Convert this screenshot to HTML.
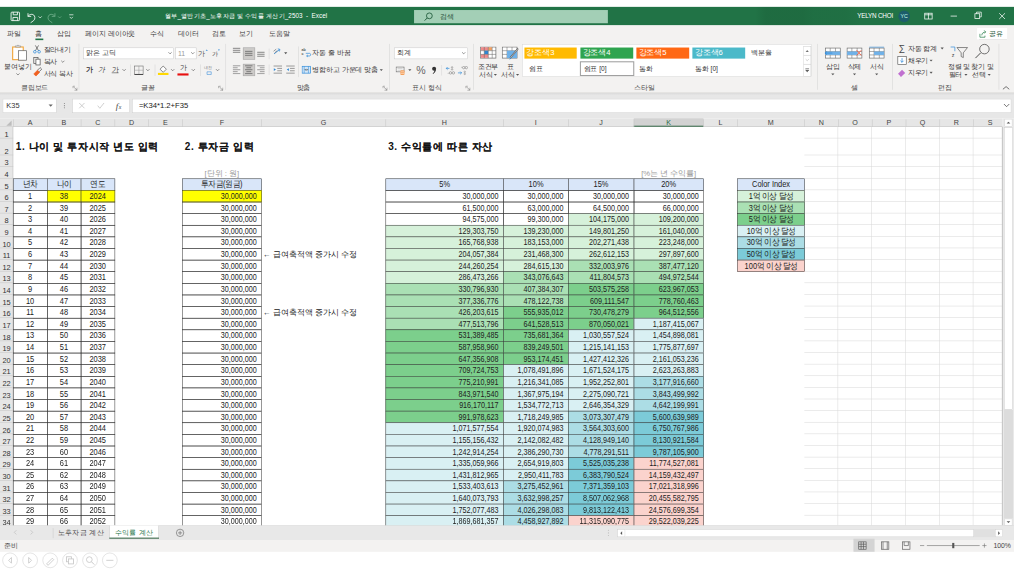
<!DOCTYPE html>
<html><head><meta charset="utf-8"><style>
html,body{margin:0;padding:0;width:1014px;height:570px;overflow:hidden;background:#fff}
#root{position:absolute;left:0;top:0;width:1920px;height:1080px;transform:scale(0.528125);transform-origin:0 0;font-family:"Liberation Sans",sans-serif}
#root div{position:absolute}
.t{white-space:nowrap;line-height:1}
.c{overflow:hidden}
</style></head><body><div id="root">
<div style="left:0px;top:0px;width:1920px;height:13px;background:#fff"></div>
<div style="left:0px;top:13px;width:1920px;height:35px;background:#217346"></div>
<div style="left:1430px;top:13px;width:200px;height:35px;background:linear-gradient(90deg, rgba(0,0,0,0) 0%, rgba(10,40,20,0.10) 10%, rgba(10,40,20,0.10) 45%, rgba(10,40,20,0.06) 55%, rgba(10,40,20,0.05) 85%, rgba(0,0,0,0) 100%)"></div>
<svg style="position:absolute;left:0;top:13px" width="300" height="35" viewBox="0 0 300 35">
<g fill="none" stroke="#fff" stroke-width="1.6">
<rect x="21" y="10" width="16" height="16" rx="1.5"/>
<path d="M25 10v5h8v-5M24.5 26v-6h9v6"/>
<path d="M53 12v6h6M53 18c3-5 12-6 13 2c1 5-5 8-8 10" />
</g>
<path d="M73 18l3 3l3-3" fill="none" stroke="#fff" stroke-width="1.3"/>
<g fill="none" stroke="#6fae8b" stroke-width="1.6">
<path d="M104 12v6h-6M104 18c-3-5-12-6-13 2c-1 5 5 8 8 10"/>
</g>
<path d="M110 18l3 3l3-3" fill="none" stroke="#6fae8b" stroke-width="1.3"/>
<path d="M131 15h8M132 19l3 3l3-3" fill="none" stroke="#fff" stroke-width="1.3"/>
</svg>
<div class="t" style="left:312px;top:30px;transform:translateY(-50%);color:#fff;font-size:12px;letter-spacing:0px">월부_열반기초_노후자금 및 수익률 계산기_2503&nbsp; -&nbsp; Excel</div>
<div style="left:784px;top:19px;width:367px;height:25px;background:#a3cfb6"></div>
<svg style="position:absolute;left:800px;top:22px" width="24" height="20" viewBox="0 0 24 20"><circle cx="13" cy="8" r="5.5" fill="none" stroke="#1f5a3a" stroke-width="1.6"/><path d="M9 12l-5 5" stroke="#1f5a3a" stroke-width="1.8"/></svg>
<div class="t" style="left:833px;top:31.5px;transform:translateY(-50%);color:#1f4a33;font-size:13.5px">검색</div>
<div class="t" style="left:1623px;top:31px;transform:translateY(-50%);color:#fff;font-size:12px;letter-spacing:-0.4px">YELYN CHOI</div>
<div style="left:1701px;top:20px;width:22px;height:22px;border-radius:50%;background:#1d5d6b"></div>
<div class="t" style="left:1712px;top:31px;transform:translate(-50%,-50%);color:#cfe;font-size:10px">YC</div>
<svg style="position:absolute;left:1737px;top:13px" width="180" height="35" viewBox="0 0 180 35">
<g fill="none" stroke="#fff" stroke-width="1.4">
<rect x="14" y="12" width="14" height="11"/><path d="M21 12v11M14 15h14"/>
<path d="M63 17.5h12"/>
<rect x="109" y="13" width="9" height="9"/><path d="M112 13v-3h9v9h-3"/>
<path d="M155 12l11 11M166 12l-11 11"/>
</g></svg>
<div style="left:0px;top:48px;width:1920px;height:126.5px;background:#f3f2f1"></div>
<div class="t" style="left:26px;top:62.5px;transform:translate(-50%,-50%);font-size:13px;color:#333">파일</div>
<div class="t" style="left:73.5px;top:62.5px;transform:translate(-50%,-50%);font-size:13px;color:#333">홈</div>
<div class="t" style="left:121px;top:62.5px;transform:translate(-50%,-50%);font-size:13px;color:#333">삽입</div>
<div class="t" style="left:209px;top:62.5px;transform:translate(-50%,-50%);font-size:13px;color:#333">페이지 레이아웃</div>
<div class="t" style="left:296.5px;top:62.5px;transform:translate(-50%,-50%);font-size:13px;color:#333">수식</div>
<div class="t" style="left:357px;top:62.5px;transform:translate(-50%,-50%);font-size:13px;color:#333">데이터</div>
<div class="t" style="left:415px;top:62.5px;transform:translate(-50%,-50%);font-size:13px;color:#333">검토</div>
<div class="t" style="left:465px;top:62.5px;transform:translate(-50%,-50%);font-size:13px;color:#333">보기</div>
<div class="t" style="left:528.5px;top:62.5px;transform:translate(-50%,-50%);font-size:13px;color:#333">도움말</div>
<div style="left:67px;top:73px;width:15px;height:3px;background:#217346"></div>
<div style="left:1850px;top:52.5px;width:57px;height:22px;background:#fff;box-shadow:0 0 1.5px rgba(0,0,0,0.18)"></div>
<svg style="position:absolute;left:1853px;top:55px" width="18" height="18" viewBox="0 0 18 18"><path d="M2.5 9v6.5h9.5v-3" fill="none" stroke="#3c8a5a" stroke-width="1.5"/><path d="M6 12c0-4 3-6.5 7-6.5M10.5 2.5l3 3l-3 3" fill="none" stroke="#3c8a5a" stroke-width="1.5"/></svg>
<div class="t" style="left:1872px;top:63.5px;transform:translateY(-50%);font-size:13.5px;color:#2a5a3c">공유</div>
<div style="left:149px;top:83px;width:1px;height:87px;background:#d4d4d4"></div>
<div style="left:427px;top:83px;width:1px;height:87px;background:#d4d4d4"></div>
<div style="left:737px;top:83px;width:1px;height:87px;background:#d4d4d4"></div>
<div style="left:896px;top:83px;width:1px;height:87px;background:#d4d4d4"></div>
<div style="left:1547px;top:83px;width:1px;height:87px;background:#d4d4d4"></div>
<div style="left:1689px;top:83px;width:1px;height:87px;background:#d4d4d4"></div>
<div style="left:1891px;top:83px;width:1px;height:87px;background:#d4d4d4"></div>
<div class="t" style="left:65.5px;top:165.5px;transform:translate(-50%,-50%);font-size:12.5px;color:#444">클립보드</div>
<div class="t" style="left:280px;top:165.5px;transform:translate(-50%,-50%);font-size:12.5px;color:#444">글꼴</div>
<div class="t" style="left:574.5px;top:165.5px;transform:translate(-50%,-50%);font-size:12.5px;color:#444">맞춤</div>
<div class="t" style="left:808px;top:165.5px;transform:translate(-50%,-50%);font-size:12.5px;color:#444">표시 형식</div>
<div class="t" style="left:1220px;top:165.5px;transform:translate(-50%,-50%);font-size:12.5px;color:#444">스타일</div>
<div class="t" style="left:1618px;top:165.5px;transform:translate(-50%,-50%);font-size:12.5px;color:#444">셀</div>
<div class="t" style="left:1790px;top:165.5px;transform:translate(-50%,-50%);font-size:12.5px;color:#444">편집</div>
<svg style="position:absolute;left:137px;top:162px" width="10" height="10" viewBox="0 0 10 10"><path d="M1 1h4M1 1v4M9 9H4M9 9V4M3 3l6 6" fill="none" stroke="#666" stroke-width="1"/></svg>
<svg style="position:absolute;left:413px;top:162px" width="10" height="10" viewBox="0 0 10 10"><path d="M1 1h4M1 1v4M9 9H4M9 9V4M3 3l6 6" fill="none" stroke="#666" stroke-width="1"/></svg>
<svg style="position:absolute;left:724px;top:162px" width="10" height="10" viewBox="0 0 10 10"><path d="M1 1h4M1 1v4M9 9H4M9 9V4M3 3l6 6" fill="none" stroke="#666" stroke-width="1"/></svg>
<svg style="position:absolute;left:881px;top:162px" width="10" height="10" viewBox="0 0 10 10"><path d="M1 1h4M1 1v4M9 9H4M9 9V4M3 3l6 6" fill="none" stroke="#666" stroke-width="1"/></svg>
<svg style="position:absolute;left:1895px;top:160px" width="20" height="12" viewBox="0 0 20 12"><path d="M4 9l6-5l6 5" fill="none" stroke="#444" stroke-width="1.4"/></svg>
<svg style="position:absolute;left:20px;top:84px" width="36" height="32" viewBox="0 0 36 32">
<rect x="4" y="5" width="20" height="24" fill="#fff" stroke="#f0a030" stroke-width="2"/>
<path d="M9 5v-2h4l1-2h0l1 2h4v2z" fill="#fff" stroke="#888" stroke-width="1.2"/>
<rect x="15" y="12" width="15" height="18" fill="#fff" stroke="#666" stroke-width="1.4"/>
</svg>
<div class="t" style="left:34px;top:126.5px;transform:translate(-50%,-50%);font-size:12.5px;color:#333">붙여넣기</div>
<svg style="position:absolute;left:29px;top:137px" width="10" height="8" viewBox="0 0 10 8"><path d="M2 2l3 3l3-3" fill="none" stroke="#555" stroke-width="1.2"/></svg>
<svg style="position:absolute;left:60px;top:84px" width="22" height="68" viewBox="0 0 22 68">
<g fill="none" stroke-width="1.4"><path d="M7 2l6 10M13 2l-6 10" stroke="#555"/><circle cx="6" cy="14" r="2.5" stroke="#2b88d8"/><circle cx="14" cy="14" r="2.5" stroke="#2b88d8"/>
<rect x="4" y="25" width="8" height="11" stroke="#555"/><rect x="8" y="28" width="8" height="11" fill="#fff" stroke="#555"/>
<path d="M4 56l7-7l4 4l-7 7z" fill="#f06020" stroke="#f06020"/><path d="M11 49l5-5l3 3l-5 5" stroke="#555"/></g>
</svg>
<div class="t" style="left:82.5px;top:93.5px;transform:translateY(-50%);font-size:12.5px;color:#333">잘라내기</div>
<div class="t" style="left:82.5px;top:116.5px;transform:translateY(-50%);font-size:12.5px;color:#333">복사</div>
<svg style="position:absolute;left:114px;top:113px" width="10" height="8" viewBox="0 0 10 8"><path d="M2 2l3 3l3-3" fill="none" stroke="#555" stroke-width="1.2"/></svg>
<div class="t" style="left:82.5px;top:140px;transform:translateY(-50%);font-size:12.5px;color:#333">서식 복사</div>
<div style="left:158px;top:90px;width:171px;height:22px;background:#fff;border:1px solid #c8c8c8;box-sizing:border-box"></div>
<div class="t" style="left:163px;top:101px;transform:translateY(-50%);font-size:12.5px;color:#333">맑은 고딕</div>
<svg style="position:absolute;left:317px;top:97px" width="10" height="8" viewBox="0 0 10 8"><path d="M2 2l3 3l3-3" fill="none" stroke="#555" stroke-width="1.2"/></svg>
<div style="left:332px;top:90px;width:40px;height:22px;background:#fff;border:1px solid #c8c8c8;box-sizing:border-box"></div>
<div class="t" style="left:337px;top:101px;transform:translateY(-50%);font-size:13px;color:#999">11</div>
<svg style="position:absolute;left:359.5px;top:97px" width="10" height="8" viewBox="0 0 10 8"><path d="M2 2l3 3l3-3" fill="none" stroke="#555" stroke-width="1.2"/></svg>
<div class="t" style="left:382.5px;top:102px;transform:translate(-50%,-50%);font-size:13.5px;color:#444">가</div>
<div class="t" style="left:407px;top:102px;transform:translate(-50%,-50%);font-size:12px;color:#444">가</div>
<svg style="position:absolute;left:385px;top:90px" width="40" height="12" viewBox="0 0 40 12"><path d="M4.5 6l2-2.5l2 2.5z" fill="#2b88d8"/><path d="M27.5 3.5l2 2.5l2-2.5z" fill="#2b88d8"/></svg>
<div class="t" style="left:169.5px;top:132px;transform:translate(-50%,-50%);font-size:13px;color:#333;font-weight:bold">가</div>
<div class="t" style="left:193px;top:132px;transform:translate(-50%,-50%);font-size:13px;color:#333;font-style:italic">가</div>
<div class="t" style="left:218px;top:132px;transform:translate(-50%,-50%);font-size:13px;color:#333"><u>가</u></div>
<svg style="position:absolute;left:230px;top:129px" width="10" height="8" viewBox="0 0 10 8"><path d="M2 2l3 3l3-3" fill="none" stroke="#555" stroke-width="1.2"/></svg>
<div style="left:247px;top:122px;width:1px;height:22px;background:#d4d4d4"></div>
<svg style="position:absolute;left:253px;top:123px" width="20" height="20" viewBox="0 0 20 20"><rect x="2" y="2" width="16" height="16" fill="none" stroke="#777" stroke-width="1.2"/><path d="M10 2v16M2 10h16" stroke="#999" stroke-width="1"/><path d="M2 18h16" stroke="#333" stroke-width="1.6"/></svg>
<svg style="position:absolute;left:275px;top:129px" width="10" height="8" viewBox="0 0 10 8"><path d="M2 2l3 3l3-3" fill="none" stroke="#555" stroke-width="1.2"/></svg>
<div style="left:293px;top:122px;width:1px;height:22px;background:#d4d4d4"></div>
<svg style="position:absolute;left:298px;top:121px" width="22" height="22" viewBox="0 0 22 22"><path d="M5 10l6-6l6 6l-6 6z" fill="#fff" stroke="#555" stroke-width="1.3"/><rect x="1" y="17" width="20" height="4" fill="#ffd800"/></svg>
<svg style="position:absolute;left:321.6px;top:129px" width="10" height="8" viewBox="0 0 10 8"><path d="M2 2l3 3l3-3" fill="none" stroke="#555" stroke-width="1.2"/></svg>
<div class="t" style="left:346.5px;top:128px;transform:translate(-50%,-50%);font-size:13px;color:#333">가</div>
<div style="left:336px;top:139px;width:21px;height:4px;background:#e81010"></div>
<svg style="position:absolute;left:360.5px;top:129px" width="10" height="8" viewBox="0 0 10 8"><path d="M2 2l3 3l3-3" fill="none" stroke="#555" stroke-width="1.2"/></svg>
<div style="left:378.7px;top:122px;width:1px;height:22px;background:#d4d4d4"></div>
<svg style="position:absolute;left:384px;top:122px" width="20" height="22" viewBox="0 0 20 22"><text x="2" y="9" font-size="7" fill="#777" font-family="Liberation Sans">내천</text><path d="M8 14h8v5h-8z" fill="none" stroke="#2b88d8" stroke-width="1"/></svg>
<svg style="position:absolute;left:406.6px;top:129px" width="10" height="8" viewBox="0 0 10 8"><path d="M2 2l3 3l3-3" fill="none" stroke="#555" stroke-width="1.2"/></svg>
<div style="left:460px;top:89.5px;width:22.5px;height:23px;background:#cdcbc9;border:1.5px solid #a8a8a8;box-sizing:border-box"></div>
<div style="left:460px;top:120.5px;width:22.5px;height:23.5px;background:#cdcbc9;border:1.5px solid #a8a8a8;box-sizing:border-box"></div>
<svg style="position:absolute;left:439px;top:89px" width="18" height="18" viewBox="0 0 18 18"><g stroke="#555" stroke-width="1.3"><path d="M2 2.5h14M2 6.25h14M2 10h14"/></g></svg>
<svg style="position:absolute;left:462.2px;top:92px" width="18" height="18" viewBox="0 0 18 18"><g stroke="#555" stroke-width="1.3"><path d="M2 5.25h14M2 9h14M2 12.75h14"/></g></svg>
<svg style="position:absolute;left:485px;top:91px" width="18" height="18" viewBox="0 0 18 18"><g stroke="#555" stroke-width="1.3"><path d="M2 8h14M2 11.75h14M2 15.5h14"/></g></svg>
<svg style="position:absolute;left:439px;top:123.30000000000001px" width="18" height="18" viewBox="0 0 18 18"><g stroke="#555" stroke-width="1.3"><path d="M2 1.6h14M2 5.3h9M2 9h14M2 12.7h9M2 16.4h14" stroke="#777"/></g></svg>
<svg style="position:absolute;left:462.2px;top:123.30000000000001px" width="18" height="18" viewBox="0 0 18 18"><g stroke="#555" stroke-width="1.3"><path d="M2 1.6h14M4.5 5.3h9M2 9h14M4.5 12.7h9M2 16.4h14"/></g></svg>
<svg style="position:absolute;left:485px;top:123.30000000000001px" width="18" height="18" viewBox="0 0 18 18"><g stroke="#555" stroke-width="1.3"><path d="M2 1.6h14M7 5.3h9M2 9h14M7 12.7h9M2 16.4h14" stroke="#777"/></g></svg>
<div style="left:509px;top:92px;width:1px;height:20px;background:#d4d4d4"></div>
<div style="left:509px;top:122px;width:1px;height:20px;background:#d4d4d4"></div>
<svg style="position:absolute;left:515px;top:89px" width="22" height="20" viewBox="0 0 22 20"><path d="M4 13l10-8" stroke="#2b88d8" stroke-width="1.6"/><path d="M11 3.5l4 1l-1 4" fill="none" stroke="#2b88d8" stroke-width="1.4"/><path d="M3 8l5-4M5 11l5-4" stroke="#666" stroke-width="1.2"/></svg>
<svg style="position:absolute;left:537px;top:98px" width="8" height="6" viewBox="0 0 8 6"><path d="M1 1h6l-3 3.5z" fill="#555"/></svg>
<svg style="position:absolute;left:517px;top:123px" width="18" height="18" viewBox="0 0 18 18"><g stroke="#666" stroke-width="1.2"><path d="M1 2h16M8 6.5h9M8 11h9M1 15.5h16"/></g><path d="M1.5 6l4 2.8l-4 2.8z" fill="#2b88d8"/></svg>
<svg style="position:absolute;left:541px;top:123px" width="18" height="18" viewBox="0 0 18 18"><g stroke="#666" stroke-width="1.2"><path d="M1 2h16M8 6.5h9M8 11h9M1 15.5h16"/></g><path d="M6 6l-4 2.8l4 2.8z" fill="#2b88d8"/></svg>
<div style="left:565px;top:88px;width:1px;height:58px;background:#d4d4d4"></div>
<svg style="position:absolute;left:570px;top:89px" width="22" height="20" viewBox="0 0 22 20"><text x="1" y="7.5" font-size="7" fill="#555" font-family="Liberation Sans" font-weight="bold">ab</text><text x="1" y="16" font-size="7" fill="#555" font-family="Liberation Sans" font-weight="bold">c</text><path d="M9 12h7c3 0 3 5 0 5h-5M13 15l-2.5 2l2.5 2" fill="none" stroke="#2b88d8" stroke-width="1.3"/></svg>
<div class="t" style="left:591.5px;top:99.5px;transform:translateY(-50%);font-size:12.5px;color:#333">자동 줄 바꿈</div>
<svg style="position:absolute;left:571px;top:124px" width="18" height="16" viewBox="0 0 18 16"><rect x="1" y="1.5" width="16" height="13" fill="#d5e8f8" stroke="#2b88d8" stroke-width="1.3"/><path d="M5 1.5v13M13 1.5v13" stroke="#2b88d8" stroke-width="1"/><path d="M6.5 8h5M6.5 8l1.5-1.5M6.5 8l1.5 1.5M11.5 8l-1.5-1.5M11.5 8l-1.5 1.5" stroke="#444" stroke-width="1" fill="none"/></svg>
<div class="t" style="left:591.5px;top:132px;transform:translateY(-50%);font-size:12.5px;color:#333">병합하고 가운데 맞춤</div>
<svg style="position:absolute;left:717.5px;top:130px" width="8" height="6" viewBox="0 0 8 6"><path d="M1 1h6l-3 3.5z" fill="#555"/></svg>
<div style="left:746px;top:90px;width:140px;height:22px;background:#fff;border:1px solid #c8c8c8;box-sizing:border-box"></div>
<div class="t" style="left:752px;top:101px;transform:translateY(-50%);font-size:12.5px;color:#333">회계</div>
<svg style="position:absolute;left:873px;top:97px" width="10" height="8" viewBox="0 0 10 8"><path d="M2 2l3 3l3-3" fill="none" stroke="#555" stroke-width="1.2"/></svg>
<svg style="position:absolute;left:749px;top:125px" width="20" height="18" viewBox="0 0 20 18"><rect x="1" y="2" width="15" height="9" fill="#fff" stroke="#666" stroke-width="1.2"/><path d="M3.5 5h10M3.5 8h10" stroke="#999" stroke-width="0.9"/><rect x="9" y="8" width="8" height="9" rx="2" fill="#f5a05a"/><path d="M9.5 11h7M9.5 14h7" stroke="#fff" stroke-width="0.9"/></svg>
<svg style="position:absolute;left:771.6px;top:130px" width="8" height="6" viewBox="0 0 8 6"><path d="M1 1h6l-3 3.5z" fill="#555"/></svg>
<div class="t" style="left:797px;top:132.5px;transform:translate(-50%,-50%);font-size:20px;color:#666">%</div>
<svg style="position:absolute;left:816px;top:125px" width="12" height="16" viewBox="0 0 12 16"><circle cx="6" cy="5" r="3.8" fill="#333"/><path d="M9.5 5.5c0 4-2 7.5-5.5 9.5l-0.8-1c2.2-1.6 3.3-3.6 3.3-6z" fill="#333"/></svg>
<div style="left:835.5px;top:123px;width:1px;height:20px;background:#d4d4d4"></div>
<svg style="position:absolute;left:843px;top:125px" width="20" height="18" viewBox="0 0 20 18"><path d="M8 4.5h-6M2 4.5l2.5-2.5M2 4.5l2.5 2.5" fill="none" stroke="#2b88d8" stroke-width="1.3"/><circle cx="13" cy="2.5" r="1.4" fill="none" stroke="#777" stroke-width="0.9"/><circle cx="13" cy="6.5" r="1.4" fill="none" stroke="#777" stroke-width="0.9"/><path d="M5 14h1" stroke="#777" stroke-width="1.5"/><circle cx="10" cy="13" r="2.3" fill="none" stroke="#777" stroke-width="1"/><circle cx="15.5" cy="13" r="2.3" fill="none" stroke="#777" stroke-width="1"/></svg>
<svg style="position:absolute;left:866px;top:125px" width="20" height="18" viewBox="0 0 20 18"><path d="M8 2.5h1" stroke="#777" stroke-width="1.5"/><circle cx="12" cy="3" r="2.3" fill="none" stroke="#777" stroke-width="1"/><circle cx="17" cy="3" r="2.3" fill="none" stroke="#777" stroke-width="1"/><path d="M1 13h7M8 13l-2.5-2.5M8 13l-2.5 2.5" fill="none" stroke="#2b88d8" stroke-width="1.3"/><circle cx="14" cy="11" r="1.4" fill="none" stroke="#777" stroke-width="0.9"/><circle cx="14" cy="15" r="1.4" fill="none" stroke="#777" stroke-width="0.9"/></svg>
<svg style="position:absolute;left:909px;top:88px" width="32" height="24" viewBox="0 0 32 24">
<rect x="1" y="1" width="29" height="21" fill="#fff" stroke="#666" stroke-width="1.3"/>
<rect x="1.5" y="1.5" width="14" height="6" fill="#f08a8a"/><rect x="8" y="8" width="7.5" height="7" fill="#2b88d8"/><rect x="1.5" y="15" width="14" height="6.5" fill="#f08a8a"/><rect x="15.5" y="1.5" width="7" height="6" fill="#f4a060"/>
<path d="M1 8h29M1 15h29M8 1v21M15.5 1v21M23 1v21" stroke="#666" stroke-width="1"/>
</svg>
<div class="t" style="left:924px;top:125.5px;transform:translate(-50%,-50%);font-size:12.5px;color:#333">조건부</div>
<div class="t" style="left:907px;top:141.5px;transform:translateY(-50%);font-size:12.5px;color:#333">서식</div>
<svg style="position:absolute;left:934px;top:139px" width="8" height="6" viewBox="0 0 8 6"><path d="M1 1h6l-3 3.5z" fill="#555"/></svg>
<svg style="position:absolute;left:950px;top:88px" width="34" height="28" viewBox="0 0 34 28">
<rect x="1" y="1" width="28" height="21" fill="#fff" stroke="#666" stroke-width="1.3"/>
<path d="M1 8h28M1 15h28M10 1v21M19.5 1v21" stroke="#666" stroke-width="1"/><rect x="10" y="8" width="19" height="14" fill="#6fb1e8"/>
<path d="M31 4l-15 18" stroke="#555" stroke-width="3"/><path d="M31 4l-15 18" stroke="#fff" stroke-width="1"/><path d="M17 21l-3 4l4-2z" fill="#2b88d8"/>
</svg>
<div class="t" style="left:965.7px;top:125.5px;transform:translate(-50%,-50%);font-size:12.5px;color:#333">표</div>
<div class="t" style="left:949px;top:141.5px;transform:translateY(-50%);font-size:12.5px;color:#333">서식</div>
<svg style="position:absolute;left:976px;top:139px" width="8" height="6" viewBox="0 0 8 6"><path d="M1 1h6l-3 3.5z" fill="#555"/></svg>
<div style="left:989px;top:84px;width:548px;height:61px;background:#fff;border:1px solid #d8d8d8;box-sizing:border-box"></div>
<div style="left:992.7px;top:90px;width:99.79999999999995px;height:20.5px;background:#ffba00"></div>
<div class="t" style="left:996.7px;top:100px;transform:translateY(-50%);font-size:14.5px;color:#fff;letter-spacing:0px">강조색3</div>
<div style="left:1099px;top:90px;width:99.59999999999991px;height:20.5px;background:#2ea44f"></div>
<div class="t" style="left:1103px;top:100px;transform:translateY(-50%);font-size:14.5px;color:#fff;letter-spacing:0px">강조색4</div>
<div style="left:1205px;top:90px;width:99.59999999999991px;height:20.5px;background:#ff6814"></div>
<div class="t" style="left:1209px;top:100px;transform:translateY(-50%);font-size:14.5px;color:#fff;letter-spacing:0px">강조색5</div>
<div style="left:1311.4px;top:90px;width:99.29999999999995px;height:20.5px;background:#4bb9c9"></div>
<div class="t" style="left:1315.4px;top:100px;transform:translateY(-50%);font-size:14.5px;color:#fff;letter-spacing:0px">강조색6</div>
<div class="t" style="left:1421.6px;top:100px;transform:translateY(-50%);font-size:12.5px;color:#333">백분율</div>
<div style="left:1098px;top:116px;width:103px;height:28px;border:2px solid #a0a0a0;box-sizing:border-box"></div>
<div class="t" style="left:1001px;top:130px;transform:translateY(-50%);font-size:12.5px;color:#333">쉼표</div>
<div class="t" style="left:1105px;top:130px;transform:translateY(-50%);font-size:12.5px;color:#333">쉼표 [0]</div>
<div class="t" style="left:1210px;top:130px;transform:translateY(-50%);font-size:12.5px;color:#333">통화</div>
<div class="t" style="left:1316px;top:130px;transform:translateY(-50%);font-size:12.5px;color:#333">통화 [0]</div>
<svg style="position:absolute;left:1521px;top:87px" width="16" height="58" viewBox="0 0 16 58">
<rect x="0.5" y="0.5" width="14" height="57" fill="#fff" stroke="#c8c8c8"/>
<path d="M0.5 18h14M0.5 35h14" stroke="#c8c8c8"/>
<path d="M4.5 11l3-3l3 3z" fill="#444"/><path d="M4.5 25l3 3l3-3" fill="none" stroke="#aaa"/>
<path d="M4 43h7M4.5 46l3 3l3-3z" stroke="#444" fill="#444"/>
</svg>
<svg style="position:absolute;left:1560.7px;top:88px" width="32" height="24" viewBox="0 0 32 24"><rect x="2" y="3" width="28" height="19" fill="#fff" stroke="#666" stroke-width="1.2"/><path d="M2 9.5h28M2 16h28M11 3v19M21 3v19" stroke="#666" stroke-width="1"/><rect x="2" y="9.5" width="28" height="6.5" fill="#6fb1e8"/><path d="M1 12.5h14M1 12.5l4-3M1 12.5l4 3" stroke="#2b88d8" stroke-width="1.3" fill="none"/></svg>
<div class="t" style="left:1576.7px;top:126px;transform:translate(-50%,-50%);font-size:12.5px;color:#333">삽입</div>
<svg style="position:absolute;left:1572.7px;top:138px" width="8" height="6" viewBox="0 0 8 6"><path d="M1 1h6l-3 3.5z" fill="#555"/></svg>
<svg style="position:absolute;left:1601.8px;top:88px" width="32" height="24" viewBox="0 0 32 24"><rect x="2" y="3" width="28" height="19" fill="#fff" stroke="#666" stroke-width="1.2"/><path d="M2 9.5h28M2 16h28M11 3v19M21 3v19" stroke="#666" stroke-width="1"/><rect x="2" y="9.5" width="20" height="6.5" fill="#6fb1e8"/><path d="M20 7l9 10M29 7l-9 10" stroke="#f05a40" stroke-width="1.6"/></svg>
<div class="t" style="left:1617.8px;top:126px;transform:translate(-50%,-50%);font-size:12.5px;color:#333">삭제</div>
<svg style="position:absolute;left:1613.8px;top:138px" width="8" height="6" viewBox="0 0 8 6"><path d="M1 1h6l-3 3.5z" fill="#555"/></svg>
<svg style="position:absolute;left:1644px;top:88px" width="32" height="24" viewBox="0 0 32 24"><rect x="2" y="3" width="28" height="19" fill="#fff" stroke="#666" stroke-width="1.2"/><path d="M2 9.5h28M2 16h28M11 3v19M21 3v19" stroke="#666" stroke-width="1"/><rect x="11" y="9.5" width="19" height="6.5" fill="#6fb1e8"/><path d="M2 1h28" stroke="#2b88d8" stroke-width="1.5"/></svg>
<div class="t" style="left:1660px;top:126px;transform:translate(-50%,-50%);font-size:12.5px;color:#333">서식</div>
<svg style="position:absolute;left:1656px;top:138px" width="8" height="6" viewBox="0 0 8 6"><path d="M1 1h6l-3 3.5z" fill="#555"/></svg>
<div class="t" style="left:1707.5px;top:91.5px;transform:translate(-50%,-50%);font-size:17px;color:#444">∑</div>
<div class="t" style="left:1718.7px;top:92px;transform:translateY(-50%);font-size:12.5px;color:#333">자동 합계</div>
<svg style="position:absolute;left:1780px;top:89px" width="8" height="6" viewBox="0 0 8 6"><path d="M1 1h6l-3 3.5z" fill="#555"/></svg>
<svg style="position:absolute;left:1698px;top:105px" width="20" height="20" viewBox="0 0 20 20"><rect x="2" y="2" width="16" height="15" fill="#fff" stroke="#555" stroke-width="1.2"/><path d="M10 5v8M7 10l3 3l3-3" fill="none" stroke="#2b88d8" stroke-width="1.4"/></svg>
<div class="t" style="left:1718.7px;top:115px;transform:translateY(-50%);font-size:12.5px;color:#333">채우기</div>
<svg style="position:absolute;left:1758.5px;top:112px" width="8" height="6" viewBox="0 0 8 6"><path d="M1 1h6l-3 3.5z" fill="#555"/></svg>
<svg style="position:absolute;left:1698px;top:128px" width="20" height="20" viewBox="0 0 20 20"><path d="M2 12l8-8l6 6l-8 8z" fill="#c070d0"/><path d="M2 12l4 4" stroke="#fff" stroke-width="1"/></svg>
<div class="t" style="left:1718.7px;top:138.4px;transform:translateY(-50%);font-size:12.5px;color:#333">지우기</div>
<svg style="position:absolute;left:1758.5px;top:135.4px" width="8" height="6" viewBox="0 0 8 6"><path d="M1 1h6l-3 3.5z" fill="#555"/></svg>
<svg style="position:absolute;left:1798px;top:84px" width="36" height="30" viewBox="0 0 36 30">
<path d="M2 5h8v8" fill="none" stroke="#2b88d8" stroke-width="1.3"/><text x="4" y="24" font-size="10" fill="#444" font-family="Liberation Sans">z</text>
<path d="M14 6h20l-8 10v9l-4-2v-7z" fill="none" stroke="#555" stroke-width="1.3"/>
</svg>
<div class="t" style="left:1816px;top:126px;transform:translate(-50%,-50%);font-size:12.5px;color:#333">정렬 및</div>
<div class="t" style="left:1809px;top:141.8px;transform:translate(-50%,-50%);font-size:12.5px;color:#333">필터</div>
<svg style="position:absolute;left:1825px;top:139px" width="8" height="6" viewBox="0 0 8 6"><path d="M1 1h6l-3 3.5z" fill="#555"/></svg>
<svg style="position:absolute;left:1842px;top:80px" width="36" height="34" viewBox="0 0 36 34">
<circle cx="22" cy="13" r="9" fill="none" stroke="#444" stroke-width="1.4"/><path d="M15 20l-10 10" stroke="#444" stroke-width="1.8"/>
</svg>
<div class="t" style="left:1860.5px;top:126px;transform:translate(-50%,-50%);font-size:12.5px;color:#333">찾기 및</div>
<div class="t" style="left:1853px;top:141.8px;transform:translate(-50%,-50%);font-size:12.5px;color:#333">선택</div>
<svg style="position:absolute;left:1869px;top:139px" width="8" height="6" viewBox="0 0 8 6"><path d="M1 1h6l-3 3.5z" fill="#555"/></svg>
<div style="left:0px;top:174.5px;width:1920px;height:1.5px;background:#d4d2d0"></div>
<div style="left:0px;top:176px;width:1920px;height:4px;background:linear-gradient(#dadada,#e6e6e6)"></div>
<div style="left:0px;top:180px;width:1920px;height:44px;background:#e7e7e7"></div>
<div style="left:5px;top:186.5px;width:102px;height:27px;background:#fff;border:1.5px solid #cdcdcd;box-sizing:border-box"></div>
<div class="t" style="left:12px;top:200px;transform:translateY(-50%);font-size:14px;color:#333">K35</div>
<svg style="position:absolute;left:90px;top:196px" width="12" height="8" viewBox="0 0 12 8"><path d="M2 2h8l-4 4z" fill="#666"/></svg>
<svg style="position:absolute;left:119px;top:190px" width="6" height="20" viewBox="0 0 6 20"><circle cx="3" cy="6" r="1.1" fill="#888"/><circle cx="3" cy="10" r="1.1" fill="#888"/><circle cx="3" cy="14" r="1.1" fill="#888"/></svg>
<div style="left:137px;top:186.5px;width:109px;height:27px;background:#fff;border:1.5px solid #cdcdcd;box-sizing:border-box"></div>
<svg style="position:absolute;left:140px;top:188px" width="104" height="24" viewBox="0 0 104 24">
<path d="M10 7l10 10M20 7l-10 10" stroke="#b8b8b8" stroke-width="1.3"/>
<path d="M45 12l4 5l8-10" fill="none" stroke="#b8b8b8" stroke-width="1.3"/>
<text x="79" y="18" font-size="17" font-style="italic" fill="#444" font-family="Liberation Serif">f</text><text x="85" y="19" font-size="11" font-style="italic" fill="#444" font-family="Liberation Serif">x</text>
</svg>
<div style="left:250px;top:186.5px;width:1665px;height:27px;background:#fff;border:1.5px solid #cdcdcd;box-sizing:border-box"></div>
<div class="t" style="left:263px;top:200px;transform:translateY(-50%);font-size:14.5px;color:#222">=K34*1.2+F35</div>
<svg style="position:absolute;left:1899px;top:195px" width="14" height="10" viewBox="0 0 14 10"><path d="M2 2l5 5l5-5" fill="none" stroke="#444" stroke-width="1.4"/></svg>
<div style="left:0px;top:224px;width:1920px;height:771px;background:#fff"></div>
<div style="left:0px;top:224px;width:1898px;height:16px;background:#e6e6e6;border-bottom:1px solid #bdbdbd;box-sizing:border-box"></div>
<div style="left:1200px;top:224px;width:132px;height:16px;background:#d2d2d2;border-bottom:2px solid #3b6e4e;box-sizing:border-box"></div>
<div style="left:25px;top:226px;width:1px;height:14px;background:#c6c6c6"></div>
<div class="t" style="left:57.0px;top:232.5px;transform:translate(-50%,-50%);font-size:13.5px;color:#444">A</div>
<div style="left:89px;top:226px;width:1px;height:14px;background:#c6c6c6"></div>
<div class="t" style="left:121.0px;top:232.5px;transform:translate(-50%,-50%);font-size:13.5px;color:#444">B</div>
<div style="left:153px;top:226px;width:1px;height:14px;background:#c6c6c6"></div>
<div class="t" style="left:185.0px;top:232.5px;transform:translate(-50%,-50%);font-size:13.5px;color:#444">C</div>
<div style="left:217px;top:226px;width:1px;height:14px;background:#c6c6c6"></div>
<div class="t" style="left:249.0px;top:232.5px;transform:translate(-50%,-50%);font-size:13.5px;color:#444">D</div>
<div style="left:281px;top:226px;width:1px;height:14px;background:#c6c6c6"></div>
<div class="t" style="left:313.0px;top:232.5px;transform:translate(-50%,-50%);font-size:13.5px;color:#444">E</div>
<div style="left:345px;top:226px;width:1px;height:14px;background:#c6c6c6"></div>
<div class="t" style="left:420.0px;top:232.5px;transform:translate(-50%,-50%);font-size:13.5px;color:#444">F</div>
<div style="left:495px;top:226px;width:1px;height:14px;background:#c6c6c6"></div>
<div class="t" style="left:612.5px;top:232.5px;transform:translate(-50%,-50%);font-size:13.5px;color:#444">G</div>
<div style="left:730px;top:226px;width:1px;height:14px;background:#c6c6c6"></div>
<div class="t" style="left:841.5px;top:232.5px;transform:translate(-50%,-50%);font-size:13.5px;color:#444">H</div>
<div style="left:953px;top:226px;width:1px;height:14px;background:#c6c6c6"></div>
<div class="t" style="left:1014.5px;top:232.5px;transform:translate(-50%,-50%);font-size:13.5px;color:#444">I</div>
<div style="left:1076px;top:226px;width:1px;height:14px;background:#c6c6c6"></div>
<div class="t" style="left:1138.0px;top:232.5px;transform:translate(-50%,-50%);font-size:13.5px;color:#444">J</div>
<div style="left:1200px;top:226px;width:1px;height:14px;background:#c6c6c6"></div>
<div class="t" style="left:1266.0px;top:232.5px;transform:translate(-50%,-50%);font-size:13.5px;color:#2a6a45">K</div>
<div style="left:1332px;top:226px;width:1px;height:14px;background:#c6c6c6"></div>
<div class="t" style="left:1364.0px;top:232.5px;transform:translate(-50%,-50%);font-size:13.5px;color:#444">L</div>
<div style="left:1396px;top:226px;width:1px;height:14px;background:#c6c6c6"></div>
<div class="t" style="left:1459.5px;top:232.5px;transform:translate(-50%,-50%);font-size:13.5px;color:#444">M</div>
<div style="left:1523px;top:226px;width:1px;height:14px;background:#c6c6c6"></div>
<div class="t" style="left:1555.0px;top:232.5px;transform:translate(-50%,-50%);font-size:13.5px;color:#444">N</div>
<div style="left:1587px;top:226px;width:1px;height:14px;background:#c6c6c6"></div>
<div class="t" style="left:1619.0px;top:232.5px;transform:translate(-50%,-50%);font-size:13.5px;color:#444">O</div>
<div style="left:1651px;top:226px;width:1px;height:14px;background:#c6c6c6"></div>
<div class="t" style="left:1683.0px;top:232.5px;transform:translate(-50%,-50%);font-size:13.5px;color:#444">P</div>
<div style="left:1715px;top:226px;width:1px;height:14px;background:#c6c6c6"></div>
<div class="t" style="left:1747.0px;top:232.5px;transform:translate(-50%,-50%);font-size:13.5px;color:#444">Q</div>
<div style="left:1779px;top:226px;width:1px;height:14px;background:#c6c6c6"></div>
<div class="t" style="left:1811.0px;top:232.5px;transform:translate(-50%,-50%);font-size:13.5px;color:#444">R</div>
<div style="left:1843px;top:226px;width:1px;height:14px;background:#c6c6c6"></div>
<div class="t" style="left:1875.0px;top:232.5px;transform:translate(-50%,-50%);font-size:13.5px;color:#444">S</div>
<svg style="position:absolute;left:8px;top:225px" width="16" height="15" viewBox="0 0 16 15"><path d="M14 3v10h-10z" fill="#bdbdbd"/></svg>
<div style="left:0px;top:240px;width:25px;height:755px;background:#e6e6e6;border-right:1px solid #bdbdbd;box-sizing:border-box"></div>
<div style="left:0px;top:261px;width:25px;height:1px;background:#c6c6c6"></div>
<div class="t" style="left:12.5px;top:253.5px;transform:translate(-50%,-50%);font-size:14px;color:#333">1</div>
<div style="left:0px;top:293px;width:25px;height:1px;background:#c6c6c6"></div>
<div class="t" style="left:12.5px;top:285.5px;transform:translate(-50%,-50%);font-size:14px;color:#333">2</div>
<div style="left:0px;top:315px;width:25px;height:1px;background:#c6c6c6"></div>
<div class="t" style="left:12.5px;top:307.5px;transform:translate(-50%,-50%);font-size:14px;color:#333">3</div>
<div style="left:0px;top:337px;width:25px;height:1px;background:#c6c6c6"></div>
<div class="t" style="left:12.5px;top:329.5px;transform:translate(-50%,-50%);font-size:14px;color:#333">4</div>
<div style="left:0px;top:359px;width:25px;height:1px;background:#c6c6c6"></div>
<div class="t" style="left:12.5px;top:351.5px;transform:translate(-50%,-50%);font-size:14px;color:#333">5</div>
<div style="left:0px;top:381px;width:25px;height:1px;background:#c6c6c6"></div>
<div class="t" style="left:12.5px;top:373.5px;transform:translate(-50%,-50%);font-size:14px;color:#333">6</div>
<div style="left:0px;top:403px;width:25px;height:1px;background:#c6c6c6"></div>
<div class="t" style="left:12.5px;top:395.5px;transform:translate(-50%,-50%);font-size:14px;color:#333">7</div>
<div style="left:0px;top:425px;width:25px;height:1px;background:#c6c6c6"></div>
<div class="t" style="left:12.5px;top:417.5px;transform:translate(-50%,-50%);font-size:14px;color:#333">8</div>
<div style="left:0px;top:447px;width:25px;height:1px;background:#c6c6c6"></div>
<div class="t" style="left:12.5px;top:439.5px;transform:translate(-50%,-50%);font-size:14px;color:#333">9</div>
<div style="left:0px;top:469px;width:25px;height:1px;background:#c6c6c6"></div>
<div class="t" style="left:12.5px;top:461.5px;transform:translate(-50%,-50%);font-size:14px;color:#333">10</div>
<div style="left:0px;top:491px;width:25px;height:1px;background:#c6c6c6"></div>
<div class="t" style="left:12.5px;top:483.5px;transform:translate(-50%,-50%);font-size:14px;color:#333">11</div>
<div style="left:0px;top:513px;width:25px;height:1px;background:#c6c6c6"></div>
<div class="t" style="left:12.5px;top:505.5px;transform:translate(-50%,-50%);font-size:14px;color:#333">12</div>
<div style="left:0px;top:535px;width:25px;height:1px;background:#c6c6c6"></div>
<div class="t" style="left:12.5px;top:527.5px;transform:translate(-50%,-50%);font-size:14px;color:#333">13</div>
<div style="left:0px;top:557px;width:25px;height:1px;background:#c6c6c6"></div>
<div class="t" style="left:12.5px;top:549.5px;transform:translate(-50%,-50%);font-size:14px;color:#333">14</div>
<div style="left:0px;top:579px;width:25px;height:1px;background:#c6c6c6"></div>
<div class="t" style="left:12.5px;top:571.5px;transform:translate(-50%,-50%);font-size:14px;color:#333">15</div>
<div style="left:0px;top:601px;width:25px;height:1px;background:#c6c6c6"></div>
<div class="t" style="left:12.5px;top:593.5px;transform:translate(-50%,-50%);font-size:14px;color:#333">16</div>
<div style="left:0px;top:623px;width:25px;height:1px;background:#c6c6c6"></div>
<div class="t" style="left:12.5px;top:615.5px;transform:translate(-50%,-50%);font-size:14px;color:#333">17</div>
<div style="left:0px;top:645px;width:25px;height:1px;background:#c6c6c6"></div>
<div class="t" style="left:12.5px;top:637.5px;transform:translate(-50%,-50%);font-size:14px;color:#333">18</div>
<div style="left:0px;top:667px;width:25px;height:1px;background:#c6c6c6"></div>
<div class="t" style="left:12.5px;top:659.5px;transform:translate(-50%,-50%);font-size:14px;color:#333">19</div>
<div style="left:0px;top:689px;width:25px;height:1px;background:#c6c6c6"></div>
<div class="t" style="left:12.5px;top:681.5px;transform:translate(-50%,-50%);font-size:14px;color:#333">20</div>
<div style="left:0px;top:711px;width:25px;height:1px;background:#c6c6c6"></div>
<div class="t" style="left:12.5px;top:703.5px;transform:translate(-50%,-50%);font-size:14px;color:#333">21</div>
<div style="left:0px;top:733px;width:25px;height:1px;background:#c6c6c6"></div>
<div class="t" style="left:12.5px;top:725.5px;transform:translate(-50%,-50%);font-size:14px;color:#333">22</div>
<div style="left:0px;top:755px;width:25px;height:1px;background:#c6c6c6"></div>
<div class="t" style="left:12.5px;top:747.5px;transform:translate(-50%,-50%);font-size:14px;color:#333">23</div>
<div style="left:0px;top:777px;width:25px;height:1px;background:#c6c6c6"></div>
<div class="t" style="left:12.5px;top:769.5px;transform:translate(-50%,-50%);font-size:14px;color:#333">24</div>
<div style="left:0px;top:799px;width:25px;height:1px;background:#c6c6c6"></div>
<div class="t" style="left:12.5px;top:791.5px;transform:translate(-50%,-50%);font-size:14px;color:#333">25</div>
<div style="left:0px;top:821px;width:25px;height:1px;background:#c6c6c6"></div>
<div class="t" style="left:12.5px;top:813.5px;transform:translate(-50%,-50%);font-size:14px;color:#333">26</div>
<div style="left:0px;top:843px;width:25px;height:1px;background:#c6c6c6"></div>
<div class="t" style="left:12.5px;top:835.5px;transform:translate(-50%,-50%);font-size:14px;color:#333">27</div>
<div style="left:0px;top:865px;width:25px;height:1px;background:#c6c6c6"></div>
<div class="t" style="left:12.5px;top:857.5px;transform:translate(-50%,-50%);font-size:14px;color:#333">28</div>
<div style="left:0px;top:887px;width:25px;height:1px;background:#c6c6c6"></div>
<div class="t" style="left:12.5px;top:879.5px;transform:translate(-50%,-50%);font-size:14px;color:#333">29</div>
<div style="left:0px;top:909px;width:25px;height:1px;background:#c6c6c6"></div>
<div class="t" style="left:12.5px;top:901.5px;transform:translate(-50%,-50%);font-size:14px;color:#333">30</div>
<div style="left:0px;top:931px;width:25px;height:1px;background:#c6c6c6"></div>
<div class="t" style="left:12.5px;top:923.5px;transform:translate(-50%,-50%);font-size:14px;color:#333">31</div>
<div style="left:0px;top:953px;width:25px;height:1px;background:#c6c6c6"></div>
<div class="t" style="left:12.5px;top:945.5px;transform:translate(-50%,-50%);font-size:14px;color:#333">32</div>
<div style="left:0px;top:975px;width:25px;height:1px;background:#c6c6c6"></div>
<div class="t" style="left:12.5px;top:967.5px;transform:translate(-50%,-50%);font-size:14px;color:#333">33</div>
<div style="left:0px;top:997px;width:25px;height:1px;background:#c6c6c6"></div>
<div class="t" style="left:12.5px;top:989.5px;transform:translate(-50%,-50%);font-size:14px;color:#333">34</div>
<div style="left:1586px;top:240px;width:1px;height:755px;background:#d9d9d9"></div>
<div style="left:1650px;top:240px;width:1px;height:755px;background:#d9d9d9"></div>
<div style="left:1714px;top:240px;width:1px;height:755px;background:#d9d9d9"></div>
<div style="left:1778px;top:240px;width:1px;height:755px;background:#d9d9d9"></div>
<div style="left:1842px;top:240px;width:1px;height:755px;background:#d9d9d9"></div>
<div style="left:1906px;top:240px;width:1px;height:755px;background:#d9d9d9"></div>
<div style="left:1523px;top:261px;width:384px;height:1px;background:#d9d9d9"></div>
<div style="left:1523px;top:293px;width:384px;height:1px;background:#d9d9d9"></div>
<div style="left:1523px;top:315px;width:384px;height:1px;background:#d9d9d9"></div>
<div style="left:1523px;top:337px;width:384px;height:1px;background:#d9d9d9"></div>
<div style="left:1523px;top:359px;width:384px;height:1px;background:#d9d9d9"></div>
<div style="left:1523px;top:381px;width:384px;height:1px;background:#d9d9d9"></div>
<div style="left:1523px;top:403px;width:384px;height:1px;background:#d9d9d9"></div>
<div style="left:1523px;top:425px;width:384px;height:1px;background:#d9d9d9"></div>
<div style="left:1523px;top:447px;width:384px;height:1px;background:#d9d9d9"></div>
<div style="left:1523px;top:469px;width:384px;height:1px;background:#d9d9d9"></div>
<div style="left:1523px;top:491px;width:384px;height:1px;background:#d9d9d9"></div>
<div style="left:1523px;top:513px;width:384px;height:1px;background:#d9d9d9"></div>
<div style="left:1523px;top:535px;width:384px;height:1px;background:#d9d9d9"></div>
<div style="left:1523px;top:557px;width:384px;height:1px;background:#d9d9d9"></div>
<div style="left:1523px;top:579px;width:384px;height:1px;background:#d9d9d9"></div>
<div style="left:1523px;top:601px;width:384px;height:1px;background:#d9d9d9"></div>
<div style="left:1523px;top:623px;width:384px;height:1px;background:#d9d9d9"></div>
<div style="left:1523px;top:645px;width:384px;height:1px;background:#d9d9d9"></div>
<div style="left:1523px;top:667px;width:384px;height:1px;background:#d9d9d9"></div>
<div style="left:1523px;top:689px;width:384px;height:1px;background:#d9d9d9"></div>
<div style="left:1523px;top:711px;width:384px;height:1px;background:#d9d9d9"></div>
<div style="left:1523px;top:733px;width:384px;height:1px;background:#d9d9d9"></div>
<div style="left:1523px;top:755px;width:384px;height:1px;background:#d9d9d9"></div>
<div style="left:1523px;top:777px;width:384px;height:1px;background:#d9d9d9"></div>
<div style="left:1523px;top:799px;width:384px;height:1px;background:#d9d9d9"></div>
<div style="left:1523px;top:821px;width:384px;height:1px;background:#d9d9d9"></div>
<div style="left:1523px;top:843px;width:384px;height:1px;background:#d9d9d9"></div>
<div style="left:1523px;top:865px;width:384px;height:1px;background:#d9d9d9"></div>
<div style="left:1523px;top:887px;width:384px;height:1px;background:#d9d9d9"></div>
<div style="left:1523px;top:909px;width:384px;height:1px;background:#d9d9d9"></div>
<div style="left:1523px;top:931px;width:384px;height:1px;background:#d9d9d9"></div>
<div style="left:1523px;top:953px;width:384px;height:1px;background:#d9d9d9"></div>
<div style="left:1523px;top:975px;width:384px;height:1px;background:#d9d9d9"></div>
<div style="left:1523px;top:997px;width:384px;height:1px;background:#d9d9d9"></div>
<div class="t" style="left:30px;top:278px;transform:translateY(-50%);font-size:19px;font-weight:bold;color:#111;letter-spacing:1.1px;-webkit-text-stroke:0.08px #111">1. 나이 및 투자시작 년도 입력</div>
<div class="t" style="left:350px;top:278px;transform:translateY(-50%);font-size:19px;font-weight:bold;color:#111;letter-spacing:1.1px;-webkit-text-stroke:0.08px #111">2. 투자금 입력</div>
<div class="t" style="left:735px;top:278px;transform:translateY(-50%);font-size:19px;font-weight:bold;color:#111;letter-spacing:1.1px;-webkit-text-stroke:0.08px #111">3. 수익률에 따른 자산</div>
<div style="left:25px;top:338px;width:65px;height:23px;background:#d9e6f9;border:1px solid #3a3a3a;margin:-0.5px 0 0 -0.5px;box-sizing:border-box;"></div>
<div class="t" style="left:57.0px;top:349.4px;transform:translate(-50%,-50%) scaleX(0.86);font-size:16.4px;color:#222;">년차</div>
<div style="left:89px;top:338px;width:65px;height:23px;background:#d9e6f9;border:1px solid #3a3a3a;margin:-0.5px 0 0 -0.5px;box-sizing:border-box;"></div>
<div class="t" style="left:121.0px;top:349.4px;transform:translate(-50%,-50%) scaleX(0.86);font-size:16.4px;color:#222;">나이</div>
<div style="left:153px;top:338px;width:65px;height:23px;background:#d9e6f9;border:1px solid #3a3a3a;margin:-0.5px 0 0 -0.5px;box-sizing:border-box;"></div>
<div class="t" style="left:185.0px;top:349.4px;transform:translate(-50%,-50%) scaleX(0.86);font-size:16.4px;color:#222;">연도</div>
<div style="left:25px;top:360px;width:65px;height:23px;border:1px solid #3a3a3a;margin:-0.5px 0 0 -0.5px;box-sizing:border-box;"></div>
<div class="t" style="left:57.0px;top:371.4px;transform:translate(-50%,-50%) scaleX(0.86);font-size:16.4px;color:#222;">1</div>
<div style="left:89px;top:360px;width:65px;height:23px;background:#ffff00;border:1px solid #3a3a3a;margin:-0.5px 0 0 -0.5px;box-sizing:border-box;"></div>
<div class="t" style="left:121.0px;top:371.4px;transform:translate(-50%,-50%) scaleX(0.86);font-size:16.4px;color:#222;">38</div>
<div style="left:153px;top:360px;width:65px;height:23px;background:#ffff00;border:1px solid #3a3a3a;margin:-0.5px 0 0 -0.5px;box-sizing:border-box;"></div>
<div class="t" style="left:185.0px;top:371.4px;transform:translate(-50%,-50%) scaleX(0.86);font-size:16.4px;color:#222;">2024</div>
<div style="left:25px;top:382px;width:65px;height:23px;border:1px solid #3a3a3a;margin:-0.5px 0 0 -0.5px;box-sizing:border-box;"></div>
<div class="t" style="left:57.0px;top:393.4px;transform:translate(-50%,-50%) scaleX(0.86);font-size:16.4px;color:#222;">2</div>
<div style="left:89px;top:382px;width:65px;height:23px;border:1px solid #3a3a3a;margin:-0.5px 0 0 -0.5px;box-sizing:border-box;"></div>
<div class="t" style="left:121.0px;top:393.4px;transform:translate(-50%,-50%) scaleX(0.86);font-size:16.4px;color:#222;">39</div>
<div style="left:153px;top:382px;width:65px;height:23px;border:1px solid #3a3a3a;margin:-0.5px 0 0 -0.5px;box-sizing:border-box;"></div>
<div class="t" style="left:185.0px;top:393.4px;transform:translate(-50%,-50%) scaleX(0.86);font-size:16.4px;color:#222;">2025</div>
<div style="left:25px;top:404px;width:65px;height:23px;border:1px solid #3a3a3a;margin:-0.5px 0 0 -0.5px;box-sizing:border-box;"></div>
<div class="t" style="left:57.0px;top:415.4px;transform:translate(-50%,-50%) scaleX(0.86);font-size:16.4px;color:#222;">3</div>
<div style="left:89px;top:404px;width:65px;height:23px;border:1px solid #3a3a3a;margin:-0.5px 0 0 -0.5px;box-sizing:border-box;"></div>
<div class="t" style="left:121.0px;top:415.4px;transform:translate(-50%,-50%) scaleX(0.86);font-size:16.4px;color:#222;">40</div>
<div style="left:153px;top:404px;width:65px;height:23px;border:1px solid #3a3a3a;margin:-0.5px 0 0 -0.5px;box-sizing:border-box;"></div>
<div class="t" style="left:185.0px;top:415.4px;transform:translate(-50%,-50%) scaleX(0.86);font-size:16.4px;color:#222;">2026</div>
<div style="left:25px;top:426px;width:65px;height:23px;border:1px solid #3a3a3a;margin:-0.5px 0 0 -0.5px;box-sizing:border-box;"></div>
<div class="t" style="left:57.0px;top:437.4px;transform:translate(-50%,-50%) scaleX(0.86);font-size:16.4px;color:#222;">4</div>
<div style="left:89px;top:426px;width:65px;height:23px;border:1px solid #3a3a3a;margin:-0.5px 0 0 -0.5px;box-sizing:border-box;"></div>
<div class="t" style="left:121.0px;top:437.4px;transform:translate(-50%,-50%) scaleX(0.86);font-size:16.4px;color:#222;">41</div>
<div style="left:153px;top:426px;width:65px;height:23px;border:1px solid #3a3a3a;margin:-0.5px 0 0 -0.5px;box-sizing:border-box;"></div>
<div class="t" style="left:185.0px;top:437.4px;transform:translate(-50%,-50%) scaleX(0.86);font-size:16.4px;color:#222;">2027</div>
<div style="left:25px;top:448px;width:65px;height:23px;border:1px solid #3a3a3a;margin:-0.5px 0 0 -0.5px;box-sizing:border-box;"></div>
<div class="t" style="left:57.0px;top:459.4px;transform:translate(-50%,-50%) scaleX(0.86);font-size:16.4px;color:#222;">5</div>
<div style="left:89px;top:448px;width:65px;height:23px;border:1px solid #3a3a3a;margin:-0.5px 0 0 -0.5px;box-sizing:border-box;"></div>
<div class="t" style="left:121.0px;top:459.4px;transform:translate(-50%,-50%) scaleX(0.86);font-size:16.4px;color:#222;">42</div>
<div style="left:153px;top:448px;width:65px;height:23px;border:1px solid #3a3a3a;margin:-0.5px 0 0 -0.5px;box-sizing:border-box;"></div>
<div class="t" style="left:185.0px;top:459.4px;transform:translate(-50%,-50%) scaleX(0.86);font-size:16.4px;color:#222;">2028</div>
<div style="left:25px;top:470px;width:65px;height:23px;border:1px solid #3a3a3a;margin:-0.5px 0 0 -0.5px;box-sizing:border-box;"></div>
<div class="t" style="left:57.0px;top:481.4px;transform:translate(-50%,-50%) scaleX(0.86);font-size:16.4px;color:#222;">6</div>
<div style="left:89px;top:470px;width:65px;height:23px;border:1px solid #3a3a3a;margin:-0.5px 0 0 -0.5px;box-sizing:border-box;"></div>
<div class="t" style="left:121.0px;top:481.4px;transform:translate(-50%,-50%) scaleX(0.86);font-size:16.4px;color:#222;">43</div>
<div style="left:153px;top:470px;width:65px;height:23px;border:1px solid #3a3a3a;margin:-0.5px 0 0 -0.5px;box-sizing:border-box;"></div>
<div class="t" style="left:185.0px;top:481.4px;transform:translate(-50%,-50%) scaleX(0.86);font-size:16.4px;color:#222;">2029</div>
<div style="left:25px;top:492px;width:65px;height:23px;border:1px solid #3a3a3a;margin:-0.5px 0 0 -0.5px;box-sizing:border-box;"></div>
<div class="t" style="left:57.0px;top:503.4px;transform:translate(-50%,-50%) scaleX(0.86);font-size:16.4px;color:#222;">7</div>
<div style="left:89px;top:492px;width:65px;height:23px;border:1px solid #3a3a3a;margin:-0.5px 0 0 -0.5px;box-sizing:border-box;"></div>
<div class="t" style="left:121.0px;top:503.4px;transform:translate(-50%,-50%) scaleX(0.86);font-size:16.4px;color:#222;">44</div>
<div style="left:153px;top:492px;width:65px;height:23px;border:1px solid #3a3a3a;margin:-0.5px 0 0 -0.5px;box-sizing:border-box;"></div>
<div class="t" style="left:185.0px;top:503.4px;transform:translate(-50%,-50%) scaleX(0.86);font-size:16.4px;color:#222;">2030</div>
<div style="left:25px;top:514px;width:65px;height:23px;border:1px solid #3a3a3a;margin:-0.5px 0 0 -0.5px;box-sizing:border-box;"></div>
<div class="t" style="left:57.0px;top:525.4px;transform:translate(-50%,-50%) scaleX(0.86);font-size:16.4px;color:#222;">8</div>
<div style="left:89px;top:514px;width:65px;height:23px;border:1px solid #3a3a3a;margin:-0.5px 0 0 -0.5px;box-sizing:border-box;"></div>
<div class="t" style="left:121.0px;top:525.4px;transform:translate(-50%,-50%) scaleX(0.86);font-size:16.4px;color:#222;">45</div>
<div style="left:153px;top:514px;width:65px;height:23px;border:1px solid #3a3a3a;margin:-0.5px 0 0 -0.5px;box-sizing:border-box;"></div>
<div class="t" style="left:185.0px;top:525.4px;transform:translate(-50%,-50%) scaleX(0.86);font-size:16.4px;color:#222;">2031</div>
<div style="left:25px;top:536px;width:65px;height:23px;border:1px solid #3a3a3a;margin:-0.5px 0 0 -0.5px;box-sizing:border-box;"></div>
<div class="t" style="left:57.0px;top:547.4px;transform:translate(-50%,-50%) scaleX(0.86);font-size:16.4px;color:#222;">9</div>
<div style="left:89px;top:536px;width:65px;height:23px;border:1px solid #3a3a3a;margin:-0.5px 0 0 -0.5px;box-sizing:border-box;"></div>
<div class="t" style="left:121.0px;top:547.4px;transform:translate(-50%,-50%) scaleX(0.86);font-size:16.4px;color:#222;">46</div>
<div style="left:153px;top:536px;width:65px;height:23px;border:1px solid #3a3a3a;margin:-0.5px 0 0 -0.5px;box-sizing:border-box;"></div>
<div class="t" style="left:185.0px;top:547.4px;transform:translate(-50%,-50%) scaleX(0.86);font-size:16.4px;color:#222;">2032</div>
<div style="left:25px;top:558px;width:65px;height:23px;border:1px solid #3a3a3a;margin:-0.5px 0 0 -0.5px;box-sizing:border-box;"></div>
<div class="t" style="left:57.0px;top:569.4px;transform:translate(-50%,-50%) scaleX(0.86);font-size:16.4px;color:#222;">10</div>
<div style="left:89px;top:558px;width:65px;height:23px;border:1px solid #3a3a3a;margin:-0.5px 0 0 -0.5px;box-sizing:border-box;"></div>
<div class="t" style="left:121.0px;top:569.4px;transform:translate(-50%,-50%) scaleX(0.86);font-size:16.4px;color:#222;">47</div>
<div style="left:153px;top:558px;width:65px;height:23px;border:1px solid #3a3a3a;margin:-0.5px 0 0 -0.5px;box-sizing:border-box;"></div>
<div class="t" style="left:185.0px;top:569.4px;transform:translate(-50%,-50%) scaleX(0.86);font-size:16.4px;color:#222;">2033</div>
<div style="left:25px;top:580px;width:65px;height:23px;border:1px solid #3a3a3a;margin:-0.5px 0 0 -0.5px;box-sizing:border-box;"></div>
<div class="t" style="left:57.0px;top:591.4px;transform:translate(-50%,-50%) scaleX(0.86);font-size:16.4px;color:#222;">11</div>
<div style="left:89px;top:580px;width:65px;height:23px;border:1px solid #3a3a3a;margin:-0.5px 0 0 -0.5px;box-sizing:border-box;"></div>
<div class="t" style="left:121.0px;top:591.4px;transform:translate(-50%,-50%) scaleX(0.86);font-size:16.4px;color:#222;">48</div>
<div style="left:153px;top:580px;width:65px;height:23px;border:1px solid #3a3a3a;margin:-0.5px 0 0 -0.5px;box-sizing:border-box;"></div>
<div class="t" style="left:185.0px;top:591.4px;transform:translate(-50%,-50%) scaleX(0.86);font-size:16.4px;color:#222;">2034</div>
<div style="left:25px;top:602px;width:65px;height:23px;border:1px solid #3a3a3a;margin:-0.5px 0 0 -0.5px;box-sizing:border-box;"></div>
<div class="t" style="left:57.0px;top:613.4px;transform:translate(-50%,-50%) scaleX(0.86);font-size:16.4px;color:#222;">12</div>
<div style="left:89px;top:602px;width:65px;height:23px;border:1px solid #3a3a3a;margin:-0.5px 0 0 -0.5px;box-sizing:border-box;"></div>
<div class="t" style="left:121.0px;top:613.4px;transform:translate(-50%,-50%) scaleX(0.86);font-size:16.4px;color:#222;">49</div>
<div style="left:153px;top:602px;width:65px;height:23px;border:1px solid #3a3a3a;margin:-0.5px 0 0 -0.5px;box-sizing:border-box;"></div>
<div class="t" style="left:185.0px;top:613.4px;transform:translate(-50%,-50%) scaleX(0.86);font-size:16.4px;color:#222;">2035</div>
<div style="left:25px;top:624px;width:65px;height:23px;border:1px solid #3a3a3a;margin:-0.5px 0 0 -0.5px;box-sizing:border-box;"></div>
<div class="t" style="left:57.0px;top:635.4px;transform:translate(-50%,-50%) scaleX(0.86);font-size:16.4px;color:#222;">13</div>
<div style="left:89px;top:624px;width:65px;height:23px;border:1px solid #3a3a3a;margin:-0.5px 0 0 -0.5px;box-sizing:border-box;"></div>
<div class="t" style="left:121.0px;top:635.4px;transform:translate(-50%,-50%) scaleX(0.86);font-size:16.4px;color:#222;">50</div>
<div style="left:153px;top:624px;width:65px;height:23px;border:1px solid #3a3a3a;margin:-0.5px 0 0 -0.5px;box-sizing:border-box;"></div>
<div class="t" style="left:185.0px;top:635.4px;transform:translate(-50%,-50%) scaleX(0.86);font-size:16.4px;color:#222;">2036</div>
<div style="left:25px;top:646px;width:65px;height:23px;border:1px solid #3a3a3a;margin:-0.5px 0 0 -0.5px;box-sizing:border-box;"></div>
<div class="t" style="left:57.0px;top:657.4px;transform:translate(-50%,-50%) scaleX(0.86);font-size:16.4px;color:#222;">14</div>
<div style="left:89px;top:646px;width:65px;height:23px;border:1px solid #3a3a3a;margin:-0.5px 0 0 -0.5px;box-sizing:border-box;"></div>
<div class="t" style="left:121.0px;top:657.4px;transform:translate(-50%,-50%) scaleX(0.86);font-size:16.4px;color:#222;">51</div>
<div style="left:153px;top:646px;width:65px;height:23px;border:1px solid #3a3a3a;margin:-0.5px 0 0 -0.5px;box-sizing:border-box;"></div>
<div class="t" style="left:185.0px;top:657.4px;transform:translate(-50%,-50%) scaleX(0.86);font-size:16.4px;color:#222;">2037</div>
<div style="left:25px;top:668px;width:65px;height:23px;border:1px solid #3a3a3a;margin:-0.5px 0 0 -0.5px;box-sizing:border-box;"></div>
<div class="t" style="left:57.0px;top:679.4px;transform:translate(-50%,-50%) scaleX(0.86);font-size:16.4px;color:#222;">15</div>
<div style="left:89px;top:668px;width:65px;height:23px;border:1px solid #3a3a3a;margin:-0.5px 0 0 -0.5px;box-sizing:border-box;"></div>
<div class="t" style="left:121.0px;top:679.4px;transform:translate(-50%,-50%) scaleX(0.86);font-size:16.4px;color:#222;">52</div>
<div style="left:153px;top:668px;width:65px;height:23px;border:1px solid #3a3a3a;margin:-0.5px 0 0 -0.5px;box-sizing:border-box;"></div>
<div class="t" style="left:185.0px;top:679.4px;transform:translate(-50%,-50%) scaleX(0.86);font-size:16.4px;color:#222;">2038</div>
<div style="left:25px;top:690px;width:65px;height:23px;border:1px solid #3a3a3a;margin:-0.5px 0 0 -0.5px;box-sizing:border-box;"></div>
<div class="t" style="left:57.0px;top:701.4px;transform:translate(-50%,-50%) scaleX(0.86);font-size:16.4px;color:#222;">16</div>
<div style="left:89px;top:690px;width:65px;height:23px;border:1px solid #3a3a3a;margin:-0.5px 0 0 -0.5px;box-sizing:border-box;"></div>
<div class="t" style="left:121.0px;top:701.4px;transform:translate(-50%,-50%) scaleX(0.86);font-size:16.4px;color:#222;">53</div>
<div style="left:153px;top:690px;width:65px;height:23px;border:1px solid #3a3a3a;margin:-0.5px 0 0 -0.5px;box-sizing:border-box;"></div>
<div class="t" style="left:185.0px;top:701.4px;transform:translate(-50%,-50%) scaleX(0.86);font-size:16.4px;color:#222;">2039</div>
<div style="left:25px;top:712px;width:65px;height:23px;border:1px solid #3a3a3a;margin:-0.5px 0 0 -0.5px;box-sizing:border-box;"></div>
<div class="t" style="left:57.0px;top:723.4px;transform:translate(-50%,-50%) scaleX(0.86);font-size:16.4px;color:#222;">17</div>
<div style="left:89px;top:712px;width:65px;height:23px;border:1px solid #3a3a3a;margin:-0.5px 0 0 -0.5px;box-sizing:border-box;"></div>
<div class="t" style="left:121.0px;top:723.4px;transform:translate(-50%,-50%) scaleX(0.86);font-size:16.4px;color:#222;">54</div>
<div style="left:153px;top:712px;width:65px;height:23px;border:1px solid #3a3a3a;margin:-0.5px 0 0 -0.5px;box-sizing:border-box;"></div>
<div class="t" style="left:185.0px;top:723.4px;transform:translate(-50%,-50%) scaleX(0.86);font-size:16.4px;color:#222;">2040</div>
<div style="left:25px;top:734px;width:65px;height:23px;border:1px solid #3a3a3a;margin:-0.5px 0 0 -0.5px;box-sizing:border-box;"></div>
<div class="t" style="left:57.0px;top:745.4px;transform:translate(-50%,-50%) scaleX(0.86);font-size:16.4px;color:#222;">18</div>
<div style="left:89px;top:734px;width:65px;height:23px;border:1px solid #3a3a3a;margin:-0.5px 0 0 -0.5px;box-sizing:border-box;"></div>
<div class="t" style="left:121.0px;top:745.4px;transform:translate(-50%,-50%) scaleX(0.86);font-size:16.4px;color:#222;">55</div>
<div style="left:153px;top:734px;width:65px;height:23px;border:1px solid #3a3a3a;margin:-0.5px 0 0 -0.5px;box-sizing:border-box;"></div>
<div class="t" style="left:185.0px;top:745.4px;transform:translate(-50%,-50%) scaleX(0.86);font-size:16.4px;color:#222;">2041</div>
<div style="left:25px;top:756px;width:65px;height:23px;border:1px solid #3a3a3a;margin:-0.5px 0 0 -0.5px;box-sizing:border-box;"></div>
<div class="t" style="left:57.0px;top:767.4px;transform:translate(-50%,-50%) scaleX(0.86);font-size:16.4px;color:#222;">19</div>
<div style="left:89px;top:756px;width:65px;height:23px;border:1px solid #3a3a3a;margin:-0.5px 0 0 -0.5px;box-sizing:border-box;"></div>
<div class="t" style="left:121.0px;top:767.4px;transform:translate(-50%,-50%) scaleX(0.86);font-size:16.4px;color:#222;">56</div>
<div style="left:153px;top:756px;width:65px;height:23px;border:1px solid #3a3a3a;margin:-0.5px 0 0 -0.5px;box-sizing:border-box;"></div>
<div class="t" style="left:185.0px;top:767.4px;transform:translate(-50%,-50%) scaleX(0.86);font-size:16.4px;color:#222;">2042</div>
<div style="left:25px;top:778px;width:65px;height:23px;border:1px solid #3a3a3a;margin:-0.5px 0 0 -0.5px;box-sizing:border-box;"></div>
<div class="t" style="left:57.0px;top:789.4px;transform:translate(-50%,-50%) scaleX(0.86);font-size:16.4px;color:#222;">20</div>
<div style="left:89px;top:778px;width:65px;height:23px;border:1px solid #3a3a3a;margin:-0.5px 0 0 -0.5px;box-sizing:border-box;"></div>
<div class="t" style="left:121.0px;top:789.4px;transform:translate(-50%,-50%) scaleX(0.86);font-size:16.4px;color:#222;">57</div>
<div style="left:153px;top:778px;width:65px;height:23px;border:1px solid #3a3a3a;margin:-0.5px 0 0 -0.5px;box-sizing:border-box;"></div>
<div class="t" style="left:185.0px;top:789.4px;transform:translate(-50%,-50%) scaleX(0.86);font-size:16.4px;color:#222;">2043</div>
<div style="left:25px;top:800px;width:65px;height:23px;border:1px solid #3a3a3a;margin:-0.5px 0 0 -0.5px;box-sizing:border-box;"></div>
<div class="t" style="left:57.0px;top:811.4px;transform:translate(-50%,-50%) scaleX(0.86);font-size:16.4px;color:#222;">21</div>
<div style="left:89px;top:800px;width:65px;height:23px;border:1px solid #3a3a3a;margin:-0.5px 0 0 -0.5px;box-sizing:border-box;"></div>
<div class="t" style="left:121.0px;top:811.4px;transform:translate(-50%,-50%) scaleX(0.86);font-size:16.4px;color:#222;">58</div>
<div style="left:153px;top:800px;width:65px;height:23px;border:1px solid #3a3a3a;margin:-0.5px 0 0 -0.5px;box-sizing:border-box;"></div>
<div class="t" style="left:185.0px;top:811.4px;transform:translate(-50%,-50%) scaleX(0.86);font-size:16.4px;color:#222;">2044</div>
<div style="left:25px;top:822px;width:65px;height:23px;border:1px solid #3a3a3a;margin:-0.5px 0 0 -0.5px;box-sizing:border-box;"></div>
<div class="t" style="left:57.0px;top:833.4px;transform:translate(-50%,-50%) scaleX(0.86);font-size:16.4px;color:#222;">22</div>
<div style="left:89px;top:822px;width:65px;height:23px;border:1px solid #3a3a3a;margin:-0.5px 0 0 -0.5px;box-sizing:border-box;"></div>
<div class="t" style="left:121.0px;top:833.4px;transform:translate(-50%,-50%) scaleX(0.86);font-size:16.4px;color:#222;">59</div>
<div style="left:153px;top:822px;width:65px;height:23px;border:1px solid #3a3a3a;margin:-0.5px 0 0 -0.5px;box-sizing:border-box;"></div>
<div class="t" style="left:185.0px;top:833.4px;transform:translate(-50%,-50%) scaleX(0.86);font-size:16.4px;color:#222;">2045</div>
<div style="left:25px;top:844px;width:65px;height:23px;border:1px solid #3a3a3a;margin:-0.5px 0 0 -0.5px;box-sizing:border-box;"></div>
<div class="t" style="left:57.0px;top:855.4px;transform:translate(-50%,-50%) scaleX(0.86);font-size:16.4px;color:#222;">23</div>
<div style="left:89px;top:844px;width:65px;height:23px;border:1px solid #3a3a3a;margin:-0.5px 0 0 -0.5px;box-sizing:border-box;"></div>
<div class="t" style="left:121.0px;top:855.4px;transform:translate(-50%,-50%) scaleX(0.86);font-size:16.4px;color:#222;">60</div>
<div style="left:153px;top:844px;width:65px;height:23px;border:1px solid #3a3a3a;margin:-0.5px 0 0 -0.5px;box-sizing:border-box;"></div>
<div class="t" style="left:185.0px;top:855.4px;transform:translate(-50%,-50%) scaleX(0.86);font-size:16.4px;color:#222;">2046</div>
<div style="left:25px;top:866px;width:65px;height:23px;border:1px solid #3a3a3a;margin:-0.5px 0 0 -0.5px;box-sizing:border-box;"></div>
<div class="t" style="left:57.0px;top:877.4px;transform:translate(-50%,-50%) scaleX(0.86);font-size:16.4px;color:#222;">24</div>
<div style="left:89px;top:866px;width:65px;height:23px;border:1px solid #3a3a3a;margin:-0.5px 0 0 -0.5px;box-sizing:border-box;"></div>
<div class="t" style="left:121.0px;top:877.4px;transform:translate(-50%,-50%) scaleX(0.86);font-size:16.4px;color:#222;">61</div>
<div style="left:153px;top:866px;width:65px;height:23px;border:1px solid #3a3a3a;margin:-0.5px 0 0 -0.5px;box-sizing:border-box;"></div>
<div class="t" style="left:185.0px;top:877.4px;transform:translate(-50%,-50%) scaleX(0.86);font-size:16.4px;color:#222;">2047</div>
<div style="left:25px;top:888px;width:65px;height:23px;border:1px solid #3a3a3a;margin:-0.5px 0 0 -0.5px;box-sizing:border-box;"></div>
<div class="t" style="left:57.0px;top:899.4px;transform:translate(-50%,-50%) scaleX(0.86);font-size:16.4px;color:#222;">25</div>
<div style="left:89px;top:888px;width:65px;height:23px;border:1px solid #3a3a3a;margin:-0.5px 0 0 -0.5px;box-sizing:border-box;"></div>
<div class="t" style="left:121.0px;top:899.4px;transform:translate(-50%,-50%) scaleX(0.86);font-size:16.4px;color:#222;">62</div>
<div style="left:153px;top:888px;width:65px;height:23px;border:1px solid #3a3a3a;margin:-0.5px 0 0 -0.5px;box-sizing:border-box;"></div>
<div class="t" style="left:185.0px;top:899.4px;transform:translate(-50%,-50%) scaleX(0.86);font-size:16.4px;color:#222;">2048</div>
<div style="left:25px;top:910px;width:65px;height:23px;border:1px solid #3a3a3a;margin:-0.5px 0 0 -0.5px;box-sizing:border-box;"></div>
<div class="t" style="left:57.0px;top:921.4px;transform:translate(-50%,-50%) scaleX(0.86);font-size:16.4px;color:#222;">26</div>
<div style="left:89px;top:910px;width:65px;height:23px;border:1px solid #3a3a3a;margin:-0.5px 0 0 -0.5px;box-sizing:border-box;"></div>
<div class="t" style="left:121.0px;top:921.4px;transform:translate(-50%,-50%) scaleX(0.86);font-size:16.4px;color:#222;">63</div>
<div style="left:153px;top:910px;width:65px;height:23px;border:1px solid #3a3a3a;margin:-0.5px 0 0 -0.5px;box-sizing:border-box;"></div>
<div class="t" style="left:185.0px;top:921.4px;transform:translate(-50%,-50%) scaleX(0.86);font-size:16.4px;color:#222;">2049</div>
<div style="left:25px;top:932px;width:65px;height:23px;border:1px solid #3a3a3a;margin:-0.5px 0 0 -0.5px;box-sizing:border-box;"></div>
<div class="t" style="left:57.0px;top:943.4px;transform:translate(-50%,-50%) scaleX(0.86);font-size:16.4px;color:#222;">27</div>
<div style="left:89px;top:932px;width:65px;height:23px;border:1px solid #3a3a3a;margin:-0.5px 0 0 -0.5px;box-sizing:border-box;"></div>
<div class="t" style="left:121.0px;top:943.4px;transform:translate(-50%,-50%) scaleX(0.86);font-size:16.4px;color:#222;">64</div>
<div style="left:153px;top:932px;width:65px;height:23px;border:1px solid #3a3a3a;margin:-0.5px 0 0 -0.5px;box-sizing:border-box;"></div>
<div class="t" style="left:185.0px;top:943.4px;transform:translate(-50%,-50%) scaleX(0.86);font-size:16.4px;color:#222;">2050</div>
<div style="left:25px;top:954px;width:65px;height:23px;border:1px solid #3a3a3a;margin:-0.5px 0 0 -0.5px;box-sizing:border-box;"></div>
<div class="t" style="left:57.0px;top:965.4px;transform:translate(-50%,-50%) scaleX(0.86);font-size:16.4px;color:#222;">28</div>
<div style="left:89px;top:954px;width:65px;height:23px;border:1px solid #3a3a3a;margin:-0.5px 0 0 -0.5px;box-sizing:border-box;"></div>
<div class="t" style="left:121.0px;top:965.4px;transform:translate(-50%,-50%) scaleX(0.86);font-size:16.4px;color:#222;">65</div>
<div style="left:153px;top:954px;width:65px;height:23px;border:1px solid #3a3a3a;margin:-0.5px 0 0 -0.5px;box-sizing:border-box;"></div>
<div class="t" style="left:185.0px;top:965.4px;transform:translate(-50%,-50%) scaleX(0.86);font-size:16.4px;color:#222;">2051</div>
<div style="left:25px;top:976px;width:65px;height:23px;border:1px solid #3a3a3a;margin:-0.5px 0 0 -0.5px;box-sizing:border-box;"></div>
<div class="t" style="left:57.0px;top:987.4px;transform:translate(-50%,-50%) scaleX(0.86);font-size:16.4px;color:#222;">29</div>
<div style="left:89px;top:976px;width:65px;height:23px;border:1px solid #3a3a3a;margin:-0.5px 0 0 -0.5px;box-sizing:border-box;"></div>
<div class="t" style="left:121.0px;top:987.4px;transform:translate(-50%,-50%) scaleX(0.86);font-size:16.4px;color:#222;">66</div>
<div style="left:153px;top:976px;width:65px;height:23px;border:1px solid #3a3a3a;margin:-0.5px 0 0 -0.5px;box-sizing:border-box;"></div>
<div class="t" style="left:185.0px;top:987.4px;transform:translate(-50%,-50%) scaleX(0.86);font-size:16.4px;color:#222;">2052</div>
<div class="t" style="left:420.0px;top:328px;transform:translate(-50%,-50%);font-size:14.5px;color:#999">[단위 : 원]</div>
<div style="left:345px;top:338px;width:151px;height:23px;background:#d9e6f9;border:1px solid #3a3a3a;margin:-0.5px 0 0 -0.5px;box-sizing:border-box;"></div>
<div class="t" style="left:420.0px;top:349.4px;transform:translate(-50%,-50%) scaleX(0.86);font-size:16.4px;color:#222;">투자금(원금)</div>
<div style="left:345px;top:360px;width:151px;height:23px;background:#ffff00;border:1px solid #3a3a3a;margin:-0.5px 0 0 -0.5px;box-sizing:border-box;"></div>
<div class="t" style="left:486px;top:371.4px;transform:translate(-100%,-50%) scaleX(0.83);transform-origin:100% 50%;font-size:16.4px;color:#222;">30,000,000</div>
<div style="left:345px;top:382px;width:151px;height:23px;border:1px solid #3a3a3a;margin:-0.5px 0 0 -0.5px;box-sizing:border-box;"></div>
<div class="t" style="left:486px;top:393.4px;transform:translate(-100%,-50%) scaleX(0.83);transform-origin:100% 50%;font-size:16.4px;color:#222;">30,000,000</div>
<div style="left:345px;top:404px;width:151px;height:23px;border:1px solid #3a3a3a;margin:-0.5px 0 0 -0.5px;box-sizing:border-box;"></div>
<div class="t" style="left:486px;top:415.4px;transform:translate(-100%,-50%) scaleX(0.83);transform-origin:100% 50%;font-size:16.4px;color:#222;">30,000,000</div>
<div style="left:345px;top:426px;width:151px;height:23px;border:1px solid #3a3a3a;margin:-0.5px 0 0 -0.5px;box-sizing:border-box;"></div>
<div class="t" style="left:486px;top:437.4px;transform:translate(-100%,-50%) scaleX(0.83);transform-origin:100% 50%;font-size:16.4px;color:#222;">30,000,000</div>
<div style="left:345px;top:448px;width:151px;height:23px;border:1px solid #3a3a3a;margin:-0.5px 0 0 -0.5px;box-sizing:border-box;"></div>
<div class="t" style="left:486px;top:459.4px;transform:translate(-100%,-50%) scaleX(0.83);transform-origin:100% 50%;font-size:16.4px;color:#222;">30,000,000</div>
<div style="left:345px;top:470px;width:151px;height:23px;border:1px solid #3a3a3a;margin:-0.5px 0 0 -0.5px;box-sizing:border-box;"></div>
<div class="t" style="left:486px;top:481.4px;transform:translate(-100%,-50%) scaleX(0.83);transform-origin:100% 50%;font-size:16.4px;color:#222;">30,000,000</div>
<div style="left:345px;top:492px;width:151px;height:23px;border:1px solid #3a3a3a;margin:-0.5px 0 0 -0.5px;box-sizing:border-box;"></div>
<div class="t" style="left:486px;top:503.4px;transform:translate(-100%,-50%) scaleX(0.83);transform-origin:100% 50%;font-size:16.4px;color:#222;">30,000,000</div>
<div style="left:345px;top:514px;width:151px;height:23px;border:1px solid #3a3a3a;margin:-0.5px 0 0 -0.5px;box-sizing:border-box;"></div>
<div class="t" style="left:486px;top:525.4px;transform:translate(-100%,-50%) scaleX(0.83);transform-origin:100% 50%;font-size:16.4px;color:#222;">30,000,000</div>
<div style="left:345px;top:536px;width:151px;height:23px;border:1px solid #3a3a3a;margin:-0.5px 0 0 -0.5px;box-sizing:border-box;"></div>
<div class="t" style="left:486px;top:547.4px;transform:translate(-100%,-50%) scaleX(0.83);transform-origin:100% 50%;font-size:16.4px;color:#222;">30,000,000</div>
<div style="left:345px;top:558px;width:151px;height:23px;border:1px solid #3a3a3a;margin:-0.5px 0 0 -0.5px;box-sizing:border-box;"></div>
<div class="t" style="left:486px;top:569.4px;transform:translate(-100%,-50%) scaleX(0.83);transform-origin:100% 50%;font-size:16.4px;color:#222;">30,000,000</div>
<div style="left:345px;top:580px;width:151px;height:23px;border:1px solid #3a3a3a;margin:-0.5px 0 0 -0.5px;box-sizing:border-box;"></div>
<div class="t" style="left:486px;top:591.4px;transform:translate(-100%,-50%) scaleX(0.83);transform-origin:100% 50%;font-size:16.4px;color:#222;">30,000,000</div>
<div style="left:345px;top:602px;width:151px;height:23px;border:1px solid #3a3a3a;margin:-0.5px 0 0 -0.5px;box-sizing:border-box;"></div>
<div class="t" style="left:486px;top:613.4px;transform:translate(-100%,-50%) scaleX(0.83);transform-origin:100% 50%;font-size:16.4px;color:#222;">30,000,000</div>
<div style="left:345px;top:624px;width:151px;height:23px;border:1px solid #3a3a3a;margin:-0.5px 0 0 -0.5px;box-sizing:border-box;"></div>
<div class="t" style="left:486px;top:635.4px;transform:translate(-100%,-50%) scaleX(0.83);transform-origin:100% 50%;font-size:16.4px;color:#222;">30,000,000</div>
<div style="left:345px;top:646px;width:151px;height:23px;border:1px solid #3a3a3a;margin:-0.5px 0 0 -0.5px;box-sizing:border-box;"></div>
<div class="t" style="left:486px;top:657.4px;transform:translate(-100%,-50%) scaleX(0.83);transform-origin:100% 50%;font-size:16.4px;color:#222;">30,000,000</div>
<div style="left:345px;top:668px;width:151px;height:23px;border:1px solid #3a3a3a;margin:-0.5px 0 0 -0.5px;box-sizing:border-box;"></div>
<div class="t" style="left:486px;top:679.4px;transform:translate(-100%,-50%) scaleX(0.83);transform-origin:100% 50%;font-size:16.4px;color:#222;">30,000,000</div>
<div style="left:345px;top:690px;width:151px;height:23px;border:1px solid #3a3a3a;margin:-0.5px 0 0 -0.5px;box-sizing:border-box;"></div>
<div class="t" style="left:486px;top:701.4px;transform:translate(-100%,-50%) scaleX(0.83);transform-origin:100% 50%;font-size:16.4px;color:#222;">30,000,000</div>
<div style="left:345px;top:712px;width:151px;height:23px;border:1px solid #3a3a3a;margin:-0.5px 0 0 -0.5px;box-sizing:border-box;"></div>
<div class="t" style="left:486px;top:723.4px;transform:translate(-100%,-50%) scaleX(0.83);transform-origin:100% 50%;font-size:16.4px;color:#222;">30,000,000</div>
<div style="left:345px;top:734px;width:151px;height:23px;border:1px solid #3a3a3a;margin:-0.5px 0 0 -0.5px;box-sizing:border-box;"></div>
<div class="t" style="left:486px;top:745.4px;transform:translate(-100%,-50%) scaleX(0.83);transform-origin:100% 50%;font-size:16.4px;color:#222;">30,000,000</div>
<div style="left:345px;top:756px;width:151px;height:23px;border:1px solid #3a3a3a;margin:-0.5px 0 0 -0.5px;box-sizing:border-box;"></div>
<div class="t" style="left:486px;top:767.4px;transform:translate(-100%,-50%) scaleX(0.83);transform-origin:100% 50%;font-size:16.4px;color:#222;">30,000,000</div>
<div style="left:345px;top:778px;width:151px;height:23px;border:1px solid #3a3a3a;margin:-0.5px 0 0 -0.5px;box-sizing:border-box;"></div>
<div class="t" style="left:486px;top:789.4px;transform:translate(-100%,-50%) scaleX(0.83);transform-origin:100% 50%;font-size:16.4px;color:#222;">30,000,000</div>
<div style="left:345px;top:800px;width:151px;height:23px;border:1px solid #3a3a3a;margin:-0.5px 0 0 -0.5px;box-sizing:border-box;"></div>
<div class="t" style="left:486px;top:811.4px;transform:translate(-100%,-50%) scaleX(0.83);transform-origin:100% 50%;font-size:16.4px;color:#222;">30,000,000</div>
<div style="left:345px;top:822px;width:151px;height:23px;border:1px solid #3a3a3a;margin:-0.5px 0 0 -0.5px;box-sizing:border-box;"></div>
<div class="t" style="left:486px;top:833.4px;transform:translate(-100%,-50%) scaleX(0.83);transform-origin:100% 50%;font-size:16.4px;color:#222;">30,000,000</div>
<div style="left:345px;top:844px;width:151px;height:23px;border:1px solid #3a3a3a;margin:-0.5px 0 0 -0.5px;box-sizing:border-box;"></div>
<div class="t" style="left:486px;top:855.4px;transform:translate(-100%,-50%) scaleX(0.83);transform-origin:100% 50%;font-size:16.4px;color:#222;">30,000,000</div>
<div style="left:345px;top:866px;width:151px;height:23px;border:1px solid #3a3a3a;margin:-0.5px 0 0 -0.5px;box-sizing:border-box;"></div>
<div class="t" style="left:486px;top:877.4px;transform:translate(-100%,-50%) scaleX(0.83);transform-origin:100% 50%;font-size:16.4px;color:#222;">30,000,000</div>
<div style="left:345px;top:888px;width:151px;height:23px;border:1px solid #3a3a3a;margin:-0.5px 0 0 -0.5px;box-sizing:border-box;"></div>
<div class="t" style="left:486px;top:899.4px;transform:translate(-100%,-50%) scaleX(0.83);transform-origin:100% 50%;font-size:16.4px;color:#222;">30,000,000</div>
<div style="left:345px;top:910px;width:151px;height:23px;border:1px solid #3a3a3a;margin:-0.5px 0 0 -0.5px;box-sizing:border-box;"></div>
<div class="t" style="left:486px;top:921.4px;transform:translate(-100%,-50%) scaleX(0.83);transform-origin:100% 50%;font-size:16.4px;color:#222;">30,000,000</div>
<div style="left:345px;top:932px;width:151px;height:23px;border:1px solid #3a3a3a;margin:-0.5px 0 0 -0.5px;box-sizing:border-box;"></div>
<div class="t" style="left:486px;top:943.4px;transform:translate(-100%,-50%) scaleX(0.83);transform-origin:100% 50%;font-size:16.4px;color:#222;">30,000,000</div>
<div style="left:345px;top:954px;width:151px;height:23px;border:1px solid #3a3a3a;margin:-0.5px 0 0 -0.5px;box-sizing:border-box;"></div>
<div class="t" style="left:486px;top:965.4px;transform:translate(-100%,-50%) scaleX(0.83);transform-origin:100% 50%;font-size:16.4px;color:#222;">30,000,000</div>
<div style="left:345px;top:976px;width:151px;height:23px;border:1px solid #3a3a3a;margin:-0.5px 0 0 -0.5px;box-sizing:border-box;"></div>
<div class="t" style="left:486px;top:987.4px;transform:translate(-100%,-50%) scaleX(0.83);transform-origin:100% 50%;font-size:16.4px;color:#222;">30,000,000</div>
<div class="t" style="left:498px;top:481.5px;transform:translateY(-50%);font-size:14.8px;color:#222">← 급여축적액 증가시 수정</div>
<div class="t" style="left:498px;top:591.5px;transform:translateY(-50%);font-size:14.8px;color:#222">← 급여축적액 증가시 수정</div>
<div class="t" style="left:1266.0px;top:328px;transform:translate(-50%,-50%);font-size:14.5px;color:#999">[%는 년 수익률]</div>
<div style="left:730px;top:338px;width:224px;height:23px;background:#d9e6f9;border:1px solid #3a3a3a;margin:-0.5px 0 0 -0.5px;box-sizing:border-box;"></div>
<div class="t" style="left:841.5px;top:349.4px;transform:translate(-50%,-50%) scaleX(0.86);font-size:16.4px;color:#222;">5%</div>
<div style="left:730px;top:360px;width:224px;height:23px;border:1px solid #3a3a3a;margin:-0.5px 0 0 -0.5px;box-sizing:border-box;"></div>
<div class="t" style="left:944px;top:371.4px;transform:translate(-100%,-50%) scaleX(0.83);transform-origin:100% 50%;font-size:16.4px;color:#222;">30,000,000</div>
<div style="left:730px;top:382px;width:224px;height:23px;border:1px solid #3a3a3a;margin:-0.5px 0 0 -0.5px;box-sizing:border-box;"></div>
<div class="t" style="left:944px;top:393.4px;transform:translate(-100%,-50%) scaleX(0.83);transform-origin:100% 50%;font-size:16.4px;color:#222;">61,500,000</div>
<div style="left:730px;top:404px;width:224px;height:23px;border:1px solid #3a3a3a;margin:-0.5px 0 0 -0.5px;box-sizing:border-box;"></div>
<div class="t" style="left:944px;top:415.4px;transform:translate(-100%,-50%) scaleX(0.83);transform-origin:100% 50%;font-size:16.4px;color:#222;">94,575,000</div>
<div style="left:730px;top:426px;width:224px;height:23px;background:#d6f1da;border:1px solid #3a3a3a;margin:-0.5px 0 0 -0.5px;box-sizing:border-box;"></div>
<div class="t" style="left:944px;top:437.4px;transform:translate(-100%,-50%) scaleX(0.83);transform-origin:100% 50%;font-size:16.4px;color:#222;">129,303,750</div>
<div style="left:730px;top:448px;width:224px;height:23px;background:#d6f1da;border:1px solid #3a3a3a;margin:-0.5px 0 0 -0.5px;box-sizing:border-box;"></div>
<div class="t" style="left:944px;top:459.4px;transform:translate(-100%,-50%) scaleX(0.83);transform-origin:100% 50%;font-size:16.4px;color:#222;">165,768,938</div>
<div style="left:730px;top:470px;width:224px;height:23px;background:#d6f1da;border:1px solid #3a3a3a;margin:-0.5px 0 0 -0.5px;box-sizing:border-box;"></div>
<div class="t" style="left:944px;top:481.4px;transform:translate(-100%,-50%) scaleX(0.83);transform-origin:100% 50%;font-size:16.4px;color:#222;">204,057,384</div>
<div style="left:730px;top:492px;width:224px;height:23px;background:#d6f1da;border:1px solid #3a3a3a;margin:-0.5px 0 0 -0.5px;box-sizing:border-box;"></div>
<div class="t" style="left:944px;top:503.4px;transform:translate(-100%,-50%) scaleX(0.83);transform-origin:100% 50%;font-size:16.4px;color:#222;">244,260,254</div>
<div style="left:730px;top:514px;width:224px;height:23px;background:#d6f1da;border:1px solid #3a3a3a;margin:-0.5px 0 0 -0.5px;box-sizing:border-box;"></div>
<div class="t" style="left:944px;top:525.4px;transform:translate(-100%,-50%) scaleX(0.83);transform-origin:100% 50%;font-size:16.4px;color:#222;">286,473,266</div>
<div style="left:730px;top:536px;width:224px;height:23px;background:#aae0b4;border:1px solid #3a3a3a;margin:-0.5px 0 0 -0.5px;box-sizing:border-box;"></div>
<div class="t" style="left:944px;top:547.4px;transform:translate(-100%,-50%) scaleX(0.83);transform-origin:100% 50%;font-size:16.4px;color:#222;">330,796,930</div>
<div style="left:730px;top:558px;width:224px;height:23px;background:#aae0b4;border:1px solid #3a3a3a;margin:-0.5px 0 0 -0.5px;box-sizing:border-box;"></div>
<div class="t" style="left:944px;top:569.4px;transform:translate(-100%,-50%) scaleX(0.83);transform-origin:100% 50%;font-size:16.4px;color:#222;">377,336,776</div>
<div style="left:730px;top:580px;width:224px;height:23px;background:#aae0b4;border:1px solid #3a3a3a;margin:-0.5px 0 0 -0.5px;box-sizing:border-box;"></div>
<div class="t" style="left:944px;top:591.4px;transform:translate(-100%,-50%) scaleX(0.83);transform-origin:100% 50%;font-size:16.4px;color:#222;">426,203,615</div>
<div style="left:730px;top:602px;width:224px;height:23px;background:#aae0b4;border:1px solid #3a3a3a;margin:-0.5px 0 0 -0.5px;box-sizing:border-box;"></div>
<div class="t" style="left:944px;top:613.4px;transform:translate(-100%,-50%) scaleX(0.83);transform-origin:100% 50%;font-size:16.4px;color:#222;">477,513,796</div>
<div style="left:730px;top:624px;width:224px;height:23px;background:#7ccf8c;border:1px solid #3a3a3a;margin:-0.5px 0 0 -0.5px;box-sizing:border-box;"></div>
<div class="t" style="left:944px;top:635.4px;transform:translate(-100%,-50%) scaleX(0.83);transform-origin:100% 50%;font-size:16.4px;color:#222;">531,389,485</div>
<div style="left:730px;top:646px;width:224px;height:23px;background:#7ccf8c;border:1px solid #3a3a3a;margin:-0.5px 0 0 -0.5px;box-sizing:border-box;"></div>
<div class="t" style="left:944px;top:657.4px;transform:translate(-100%,-50%) scaleX(0.83);transform-origin:100% 50%;font-size:16.4px;color:#222;">587,958,960</div>
<div style="left:730px;top:668px;width:224px;height:23px;background:#7ccf8c;border:1px solid #3a3a3a;margin:-0.5px 0 0 -0.5px;box-sizing:border-box;"></div>
<div class="t" style="left:944px;top:679.4px;transform:translate(-100%,-50%) scaleX(0.83);transform-origin:100% 50%;font-size:16.4px;color:#222;">647,356,908</div>
<div style="left:730px;top:690px;width:224px;height:23px;background:#7ccf8c;border:1px solid #3a3a3a;margin:-0.5px 0 0 -0.5px;box-sizing:border-box;"></div>
<div class="t" style="left:944px;top:701.4px;transform:translate(-100%,-50%) scaleX(0.83);transform-origin:100% 50%;font-size:16.4px;color:#222;">709,724,753</div>
<div style="left:730px;top:712px;width:224px;height:23px;background:#7ccf8c;border:1px solid #3a3a3a;margin:-0.5px 0 0 -0.5px;box-sizing:border-box;"></div>
<div class="t" style="left:944px;top:723.4px;transform:translate(-100%,-50%) scaleX(0.83);transform-origin:100% 50%;font-size:16.4px;color:#222;">775,210,991</div>
<div style="left:730px;top:734px;width:224px;height:23px;background:#7ccf8c;border:1px solid #3a3a3a;margin:-0.5px 0 0 -0.5px;box-sizing:border-box;"></div>
<div class="t" style="left:944px;top:745.4px;transform:translate(-100%,-50%) scaleX(0.83);transform-origin:100% 50%;font-size:16.4px;color:#222;">843,971,540</div>
<div style="left:730px;top:756px;width:224px;height:23px;background:#7ccf8c;border:1px solid #3a3a3a;margin:-0.5px 0 0 -0.5px;box-sizing:border-box;"></div>
<div class="t" style="left:944px;top:767.4px;transform:translate(-100%,-50%) scaleX(0.83);transform-origin:100% 50%;font-size:16.4px;color:#222;">916,170,117</div>
<div style="left:730px;top:778px;width:224px;height:23px;background:#7ccf8c;border:1px solid #3a3a3a;margin:-0.5px 0 0 -0.5px;box-sizing:border-box;"></div>
<div class="t" style="left:944px;top:789.4px;transform:translate(-100%,-50%) scaleX(0.83);transform-origin:100% 50%;font-size:16.4px;color:#222;">991,978,623</div>
<div style="left:730px;top:800px;width:224px;height:23px;background:#d9f0f3;border:1px solid #3a3a3a;margin:-0.5px 0 0 -0.5px;box-sizing:border-box;"></div>
<div class="t" style="left:944px;top:811.4px;transform:translate(-100%,-50%) scaleX(0.83);transform-origin:100% 50%;font-size:16.4px;color:#222;">1,071,577,554</div>
<div style="left:730px;top:822px;width:224px;height:23px;background:#d9f0f3;border:1px solid #3a3a3a;margin:-0.5px 0 0 -0.5px;box-sizing:border-box;"></div>
<div class="t" style="left:944px;top:833.4px;transform:translate(-100%,-50%) scaleX(0.83);transform-origin:100% 50%;font-size:16.4px;color:#222;">1,155,156,432</div>
<div style="left:730px;top:844px;width:224px;height:23px;background:#d9f0f3;border:1px solid #3a3a3a;margin:-0.5px 0 0 -0.5px;box-sizing:border-box;"></div>
<div class="t" style="left:944px;top:855.4px;transform:translate(-100%,-50%) scaleX(0.83);transform-origin:100% 50%;font-size:16.4px;color:#222;">1,242,914,254</div>
<div style="left:730px;top:866px;width:224px;height:23px;background:#d9f0f3;border:1px solid #3a3a3a;margin:-0.5px 0 0 -0.5px;box-sizing:border-box;"></div>
<div class="t" style="left:944px;top:877.4px;transform:translate(-100%,-50%) scaleX(0.83);transform-origin:100% 50%;font-size:16.4px;color:#222;">1,335,059,966</div>
<div style="left:730px;top:888px;width:224px;height:23px;background:#d9f0f3;border:1px solid #3a3a3a;margin:-0.5px 0 0 -0.5px;box-sizing:border-box;"></div>
<div class="t" style="left:944px;top:899.4px;transform:translate(-100%,-50%) scaleX(0.83);transform-origin:100% 50%;font-size:16.4px;color:#222;">1,431,812,965</div>
<div style="left:730px;top:910px;width:224px;height:23px;background:#d9f0f3;border:1px solid #3a3a3a;margin:-0.5px 0 0 -0.5px;box-sizing:border-box;"></div>
<div class="t" style="left:944px;top:921.4px;transform:translate(-100%,-50%) scaleX(0.83);transform-origin:100% 50%;font-size:16.4px;color:#222;">1,533,403,613</div>
<div style="left:730px;top:932px;width:224px;height:23px;background:#d9f0f3;border:1px solid #3a3a3a;margin:-0.5px 0 0 -0.5px;box-sizing:border-box;"></div>
<div class="t" style="left:944px;top:943.4px;transform:translate(-100%,-50%) scaleX(0.83);transform-origin:100% 50%;font-size:16.4px;color:#222;">1,640,073,793</div>
<div style="left:730px;top:954px;width:224px;height:23px;background:#d9f0f3;border:1px solid #3a3a3a;margin:-0.5px 0 0 -0.5px;box-sizing:border-box;"></div>
<div class="t" style="left:944px;top:965.4px;transform:translate(-100%,-50%) scaleX(0.83);transform-origin:100% 50%;font-size:16.4px;color:#222;">1,752,077,483</div>
<div style="left:730px;top:976px;width:224px;height:23px;background:#d9f0f3;border:1px solid #3a3a3a;margin:-0.5px 0 0 -0.5px;box-sizing:border-box;"></div>
<div class="t" style="left:944px;top:987.4px;transform:translate(-100%,-50%) scaleX(0.83);transform-origin:100% 50%;font-size:16.4px;color:#222;">1,869,681,357</div>
<div style="left:953px;top:338px;width:124px;height:23px;background:#d9e6f9;border:1px solid #3a3a3a;margin:-0.5px 0 0 -0.5px;box-sizing:border-box;"></div>
<div class="t" style="left:1014.5px;top:349.4px;transform:translate(-50%,-50%) scaleX(0.86);font-size:16.4px;color:#222;">10%</div>
<div style="left:953px;top:360px;width:124px;height:23px;border:1px solid #3a3a3a;margin:-0.5px 0 0 -0.5px;box-sizing:border-box;"></div>
<div class="t" style="left:1067px;top:371.4px;transform:translate(-100%,-50%) scaleX(0.83);transform-origin:100% 50%;font-size:16.4px;color:#222;">30,000,000</div>
<div style="left:953px;top:382px;width:124px;height:23px;border:1px solid #3a3a3a;margin:-0.5px 0 0 -0.5px;box-sizing:border-box;"></div>
<div class="t" style="left:1067px;top:393.4px;transform:translate(-100%,-50%) scaleX(0.83);transform-origin:100% 50%;font-size:16.4px;color:#222;">63,000,000</div>
<div style="left:953px;top:404px;width:124px;height:23px;border:1px solid #3a3a3a;margin:-0.5px 0 0 -0.5px;box-sizing:border-box;"></div>
<div class="t" style="left:1067px;top:415.4px;transform:translate(-100%,-50%) scaleX(0.83);transform-origin:100% 50%;font-size:16.4px;color:#222;">99,300,000</div>
<div style="left:953px;top:426px;width:124px;height:23px;background:#d6f1da;border:1px solid #3a3a3a;margin:-0.5px 0 0 -0.5px;box-sizing:border-box;"></div>
<div class="t" style="left:1067px;top:437.4px;transform:translate(-100%,-50%) scaleX(0.83);transform-origin:100% 50%;font-size:16.4px;color:#222;">139,230,000</div>
<div style="left:953px;top:448px;width:124px;height:23px;background:#d6f1da;border:1px solid #3a3a3a;margin:-0.5px 0 0 -0.5px;box-sizing:border-box;"></div>
<div class="t" style="left:1067px;top:459.4px;transform:translate(-100%,-50%) scaleX(0.83);transform-origin:100% 50%;font-size:16.4px;color:#222;">183,153,000</div>
<div style="left:953px;top:470px;width:124px;height:23px;background:#d6f1da;border:1px solid #3a3a3a;margin:-0.5px 0 0 -0.5px;box-sizing:border-box;"></div>
<div class="t" style="left:1067px;top:481.4px;transform:translate(-100%,-50%) scaleX(0.83);transform-origin:100% 50%;font-size:16.4px;color:#222;">231,468,300</div>
<div style="left:953px;top:492px;width:124px;height:23px;background:#d6f1da;border:1px solid #3a3a3a;margin:-0.5px 0 0 -0.5px;box-sizing:border-box;"></div>
<div class="t" style="left:1067px;top:503.4px;transform:translate(-100%,-50%) scaleX(0.83);transform-origin:100% 50%;font-size:16.4px;color:#222;">284,615,130</div>
<div style="left:953px;top:514px;width:124px;height:23px;background:#aae0b4;border:1px solid #3a3a3a;margin:-0.5px 0 0 -0.5px;box-sizing:border-box;"></div>
<div class="t" style="left:1067px;top:525.4px;transform:translate(-100%,-50%) scaleX(0.83);transform-origin:100% 50%;font-size:16.4px;color:#222;">343,076,643</div>
<div style="left:953px;top:536px;width:124px;height:23px;background:#aae0b4;border:1px solid #3a3a3a;margin:-0.5px 0 0 -0.5px;box-sizing:border-box;"></div>
<div class="t" style="left:1067px;top:547.4px;transform:translate(-100%,-50%) scaleX(0.83);transform-origin:100% 50%;font-size:16.4px;color:#222;">407,384,307</div>
<div style="left:953px;top:558px;width:124px;height:23px;background:#aae0b4;border:1px solid #3a3a3a;margin:-0.5px 0 0 -0.5px;box-sizing:border-box;"></div>
<div class="t" style="left:1067px;top:569.4px;transform:translate(-100%,-50%) scaleX(0.83);transform-origin:100% 50%;font-size:16.4px;color:#222;">478,122,738</div>
<div style="left:953px;top:580px;width:124px;height:23px;background:#7ccf8c;border:1px solid #3a3a3a;margin:-0.5px 0 0 -0.5px;box-sizing:border-box;"></div>
<div class="t" style="left:1067px;top:591.4px;transform:translate(-100%,-50%) scaleX(0.83);transform-origin:100% 50%;font-size:16.4px;color:#222;">555,935,012</div>
<div style="left:953px;top:602px;width:124px;height:23px;background:#7ccf8c;border:1px solid #3a3a3a;margin:-0.5px 0 0 -0.5px;box-sizing:border-box;"></div>
<div class="t" style="left:1067px;top:613.4px;transform:translate(-100%,-50%) scaleX(0.83);transform-origin:100% 50%;font-size:16.4px;color:#222;">641,528,513</div>
<div style="left:953px;top:624px;width:124px;height:23px;background:#7ccf8c;border:1px solid #3a3a3a;margin:-0.5px 0 0 -0.5px;box-sizing:border-box;"></div>
<div class="t" style="left:1067px;top:635.4px;transform:translate(-100%,-50%) scaleX(0.83);transform-origin:100% 50%;font-size:16.4px;color:#222;">735,681,364</div>
<div style="left:953px;top:646px;width:124px;height:23px;background:#7ccf8c;border:1px solid #3a3a3a;margin:-0.5px 0 0 -0.5px;box-sizing:border-box;"></div>
<div class="t" style="left:1067px;top:657.4px;transform:translate(-100%,-50%) scaleX(0.83);transform-origin:100% 50%;font-size:16.4px;color:#222;">839,249,501</div>
<div style="left:953px;top:668px;width:124px;height:23px;background:#7ccf8c;border:1px solid #3a3a3a;margin:-0.5px 0 0 -0.5px;box-sizing:border-box;"></div>
<div class="t" style="left:1067px;top:679.4px;transform:translate(-100%,-50%) scaleX(0.83);transform-origin:100% 50%;font-size:16.4px;color:#222;">953,174,451</div>
<div style="left:953px;top:690px;width:124px;height:23px;background:#d9f0f3;border:1px solid #3a3a3a;margin:-0.5px 0 0 -0.5px;box-sizing:border-box;"></div>
<div class="t" style="left:1067px;top:701.4px;transform:translate(-100%,-50%) scaleX(0.83);transform-origin:100% 50%;font-size:16.4px;color:#222;">1,078,491,896</div>
<div style="left:953px;top:712px;width:124px;height:23px;background:#d9f0f3;border:1px solid #3a3a3a;margin:-0.5px 0 0 -0.5px;box-sizing:border-box;"></div>
<div class="t" style="left:1067px;top:723.4px;transform:translate(-100%,-50%) scaleX(0.83);transform-origin:100% 50%;font-size:16.4px;color:#222;">1,216,341,085</div>
<div style="left:953px;top:734px;width:124px;height:23px;background:#d9f0f3;border:1px solid #3a3a3a;margin:-0.5px 0 0 -0.5px;box-sizing:border-box;"></div>
<div class="t" style="left:1067px;top:745.4px;transform:translate(-100%,-50%) scaleX(0.83);transform-origin:100% 50%;font-size:16.4px;color:#222;">1,367,975,194</div>
<div style="left:953px;top:756px;width:124px;height:23px;background:#d9f0f3;border:1px solid #3a3a3a;margin:-0.5px 0 0 -0.5px;box-sizing:border-box;"></div>
<div class="t" style="left:1067px;top:767.4px;transform:translate(-100%,-50%) scaleX(0.83);transform-origin:100% 50%;font-size:16.4px;color:#222;">1,534,772,713</div>
<div style="left:953px;top:778px;width:124px;height:23px;background:#d9f0f3;border:1px solid #3a3a3a;margin:-0.5px 0 0 -0.5px;box-sizing:border-box;"></div>
<div class="t" style="left:1067px;top:789.4px;transform:translate(-100%,-50%) scaleX(0.83);transform-origin:100% 50%;font-size:16.4px;color:#222;">1,718,249,985</div>
<div style="left:953px;top:800px;width:124px;height:23px;background:#d9f0f3;border:1px solid #3a3a3a;margin:-0.5px 0 0 -0.5px;box-sizing:border-box;"></div>
<div class="t" style="left:1067px;top:811.4px;transform:translate(-100%,-50%) scaleX(0.83);transform-origin:100% 50%;font-size:16.4px;color:#222;">1,920,074,983</div>
<div style="left:953px;top:822px;width:124px;height:23px;background:#d9f0f3;border:1px solid #3a3a3a;margin:-0.5px 0 0 -0.5px;box-sizing:border-box;"></div>
<div class="t" style="left:1067px;top:833.4px;transform:translate(-100%,-50%) scaleX(0.83);transform-origin:100% 50%;font-size:16.4px;color:#222;">2,142,082,482</div>
<div style="left:953px;top:844px;width:124px;height:23px;background:#d9f0f3;border:1px solid #3a3a3a;margin:-0.5px 0 0 -0.5px;box-sizing:border-box;"></div>
<div class="t" style="left:1067px;top:855.4px;transform:translate(-100%,-50%) scaleX(0.83);transform-origin:100% 50%;font-size:16.4px;color:#222;">2,386,290,730</div>
<div style="left:953px;top:866px;width:124px;height:23px;background:#d9f0f3;border:1px solid #3a3a3a;margin:-0.5px 0 0 -0.5px;box-sizing:border-box;"></div>
<div class="t" style="left:1067px;top:877.4px;transform:translate(-100%,-50%) scaleX(0.83);transform-origin:100% 50%;font-size:16.4px;color:#222;">2,654,919,803</div>
<div style="left:953px;top:888px;width:124px;height:23px;background:#d9f0f3;border:1px solid #3a3a3a;margin:-0.5px 0 0 -0.5px;box-sizing:border-box;"></div>
<div class="t" style="left:1067px;top:899.4px;transform:translate(-100%,-50%) scaleX(0.83);transform-origin:100% 50%;font-size:16.4px;color:#222;">2,950,411,783</div>
<div style="left:953px;top:910px;width:124px;height:23px;background:#acdde5;border:1px solid #3a3a3a;margin:-0.5px 0 0 -0.5px;box-sizing:border-box;"></div>
<div class="t" style="left:1067px;top:921.4px;transform:translate(-100%,-50%) scaleX(0.83);transform-origin:100% 50%;font-size:16.4px;color:#222;">3,275,452,961</div>
<div style="left:953px;top:932px;width:124px;height:23px;background:#acdde5;border:1px solid #3a3a3a;margin:-0.5px 0 0 -0.5px;box-sizing:border-box;"></div>
<div class="t" style="left:1067px;top:943.4px;transform:translate(-100%,-50%) scaleX(0.83);transform-origin:100% 50%;font-size:16.4px;color:#222;">3,632,998,257</div>
<div style="left:953px;top:954px;width:124px;height:23px;background:#acdde5;border:1px solid #3a3a3a;margin:-0.5px 0 0 -0.5px;box-sizing:border-box;"></div>
<div class="t" style="left:1067px;top:965.4px;transform:translate(-100%,-50%) scaleX(0.83);transform-origin:100% 50%;font-size:16.4px;color:#222;">4,026,298,083</div>
<div style="left:953px;top:976px;width:124px;height:23px;background:#acdde5;border:1px solid #3a3a3a;margin:-0.5px 0 0 -0.5px;box-sizing:border-box;"></div>
<div class="t" style="left:1067px;top:987.4px;transform:translate(-100%,-50%) scaleX(0.83);transform-origin:100% 50%;font-size:16.4px;color:#222;">4,458,927,892</div>
<div style="left:1076px;top:338px;width:125px;height:23px;background:#d9e6f9;border:1px solid #3a3a3a;margin:-0.5px 0 0 -0.5px;box-sizing:border-box;"></div>
<div class="t" style="left:1138.0px;top:349.4px;transform:translate(-50%,-50%) scaleX(0.86);font-size:16.4px;color:#222;">15%</div>
<div style="left:1076px;top:360px;width:125px;height:23px;border:1px solid #3a3a3a;margin:-0.5px 0 0 -0.5px;box-sizing:border-box;"></div>
<div class="t" style="left:1191px;top:371.4px;transform:translate(-100%,-50%) scaleX(0.83);transform-origin:100% 50%;font-size:16.4px;color:#222;">30,000,000</div>
<div style="left:1076px;top:382px;width:125px;height:23px;border:1px solid #3a3a3a;margin:-0.5px 0 0 -0.5px;box-sizing:border-box;"></div>
<div class="t" style="left:1191px;top:393.4px;transform:translate(-100%,-50%) scaleX(0.83);transform-origin:100% 50%;font-size:16.4px;color:#222;">64,500,000</div>
<div style="left:1076px;top:404px;width:125px;height:23px;background:#d6f1da;border:1px solid #3a3a3a;margin:-0.5px 0 0 -0.5px;box-sizing:border-box;"></div>
<div class="t" style="left:1191px;top:415.4px;transform:translate(-100%,-50%) scaleX(0.83);transform-origin:100% 50%;font-size:16.4px;color:#222;">104,175,000</div>
<div style="left:1076px;top:426px;width:125px;height:23px;background:#d6f1da;border:1px solid #3a3a3a;margin:-0.5px 0 0 -0.5px;box-sizing:border-box;"></div>
<div class="t" style="left:1191px;top:437.4px;transform:translate(-100%,-50%) scaleX(0.83);transform-origin:100% 50%;font-size:16.4px;color:#222;">149,801,250</div>
<div style="left:1076px;top:448px;width:125px;height:23px;background:#d6f1da;border:1px solid #3a3a3a;margin:-0.5px 0 0 -0.5px;box-sizing:border-box;"></div>
<div class="t" style="left:1191px;top:459.4px;transform:translate(-100%,-50%) scaleX(0.83);transform-origin:100% 50%;font-size:16.4px;color:#222;">202,271,438</div>
<div style="left:1076px;top:470px;width:125px;height:23px;background:#d6f1da;border:1px solid #3a3a3a;margin:-0.5px 0 0 -0.5px;box-sizing:border-box;"></div>
<div class="t" style="left:1191px;top:481.4px;transform:translate(-100%,-50%) scaleX(0.83);transform-origin:100% 50%;font-size:16.4px;color:#222;">262,612,153</div>
<div style="left:1076px;top:492px;width:125px;height:23px;background:#aae0b4;border:1px solid #3a3a3a;margin:-0.5px 0 0 -0.5px;box-sizing:border-box;"></div>
<div class="t" style="left:1191px;top:503.4px;transform:translate(-100%,-50%) scaleX(0.83);transform-origin:100% 50%;font-size:16.4px;color:#222;">332,003,976</div>
<div style="left:1076px;top:514px;width:125px;height:23px;background:#aae0b4;border:1px solid #3a3a3a;margin:-0.5px 0 0 -0.5px;box-sizing:border-box;"></div>
<div class="t" style="left:1191px;top:525.4px;transform:translate(-100%,-50%) scaleX(0.83);transform-origin:100% 50%;font-size:16.4px;color:#222;">411,804,573</div>
<div style="left:1076px;top:536px;width:125px;height:23px;background:#7ccf8c;border:1px solid #3a3a3a;margin:-0.5px 0 0 -0.5px;box-sizing:border-box;"></div>
<div class="t" style="left:1191px;top:547.4px;transform:translate(-100%,-50%) scaleX(0.83);transform-origin:100% 50%;font-size:16.4px;color:#222;">503,575,258</div>
<div style="left:1076px;top:558px;width:125px;height:23px;background:#7ccf8c;border:1px solid #3a3a3a;margin:-0.5px 0 0 -0.5px;box-sizing:border-box;"></div>
<div class="t" style="left:1191px;top:569.4px;transform:translate(-100%,-50%) scaleX(0.83);transform-origin:100% 50%;font-size:16.4px;color:#222;">609,111,547</div>
<div style="left:1076px;top:580px;width:125px;height:23px;background:#7ccf8c;border:1px solid #3a3a3a;margin:-0.5px 0 0 -0.5px;box-sizing:border-box;"></div>
<div class="t" style="left:1191px;top:591.4px;transform:translate(-100%,-50%) scaleX(0.83);transform-origin:100% 50%;font-size:16.4px;color:#222;">730,478,279</div>
<div style="left:1076px;top:602px;width:125px;height:23px;background:#7ccf8c;border:1px solid #3a3a3a;margin:-0.5px 0 0 -0.5px;box-sizing:border-box;"></div>
<div class="t" style="left:1191px;top:613.4px;transform:translate(-100%,-50%) scaleX(0.83);transform-origin:100% 50%;font-size:16.4px;color:#222;">870,050,021</div>
<div style="left:1076px;top:624px;width:125px;height:23px;background:#d9f0f3;border:1px solid #3a3a3a;margin:-0.5px 0 0 -0.5px;box-sizing:border-box;"></div>
<div class="t" style="left:1191px;top:635.4px;transform:translate(-100%,-50%) scaleX(0.83);transform-origin:100% 50%;font-size:16.4px;color:#222;">1,030,557,524</div>
<div style="left:1076px;top:646px;width:125px;height:23px;background:#d9f0f3;border:1px solid #3a3a3a;margin:-0.5px 0 0 -0.5px;box-sizing:border-box;"></div>
<div class="t" style="left:1191px;top:657.4px;transform:translate(-100%,-50%) scaleX(0.83);transform-origin:100% 50%;font-size:16.4px;color:#222;">1,215,141,153</div>
<div style="left:1076px;top:668px;width:125px;height:23px;background:#d9f0f3;border:1px solid #3a3a3a;margin:-0.5px 0 0 -0.5px;box-sizing:border-box;"></div>
<div class="t" style="left:1191px;top:679.4px;transform:translate(-100%,-50%) scaleX(0.83);transform-origin:100% 50%;font-size:16.4px;color:#222;">1,427,412,326</div>
<div style="left:1076px;top:690px;width:125px;height:23px;background:#d9f0f3;border:1px solid #3a3a3a;margin:-0.5px 0 0 -0.5px;box-sizing:border-box;"></div>
<div class="t" style="left:1191px;top:701.4px;transform:translate(-100%,-50%) scaleX(0.83);transform-origin:100% 50%;font-size:16.4px;color:#222;">1,671,524,175</div>
<div style="left:1076px;top:712px;width:125px;height:23px;background:#d9f0f3;border:1px solid #3a3a3a;margin:-0.5px 0 0 -0.5px;box-sizing:border-box;"></div>
<div class="t" style="left:1191px;top:723.4px;transform:translate(-100%,-50%) scaleX(0.83);transform-origin:100% 50%;font-size:16.4px;color:#222;">1,952,252,801</div>
<div style="left:1076px;top:734px;width:125px;height:23px;background:#d9f0f3;border:1px solid #3a3a3a;margin:-0.5px 0 0 -0.5px;box-sizing:border-box;"></div>
<div class="t" style="left:1191px;top:745.4px;transform:translate(-100%,-50%) scaleX(0.83);transform-origin:100% 50%;font-size:16.4px;color:#222;">2,275,090,721</div>
<div style="left:1076px;top:756px;width:125px;height:23px;background:#d9f0f3;border:1px solid #3a3a3a;margin:-0.5px 0 0 -0.5px;box-sizing:border-box;"></div>
<div class="t" style="left:1191px;top:767.4px;transform:translate(-100%,-50%) scaleX(0.83);transform-origin:100% 50%;font-size:16.4px;color:#222;">2,646,354,329</div>
<div style="left:1076px;top:778px;width:125px;height:23px;background:#acdde5;border:1px solid #3a3a3a;margin:-0.5px 0 0 -0.5px;box-sizing:border-box;"></div>
<div class="t" style="left:1191px;top:789.4px;transform:translate(-100%,-50%) scaleX(0.83);transform-origin:100% 50%;font-size:16.4px;color:#222;">3,073,307,479</div>
<div style="left:1076px;top:800px;width:125px;height:23px;background:#acdde5;border:1px solid #3a3a3a;margin:-0.5px 0 0 -0.5px;box-sizing:border-box;"></div>
<div class="t" style="left:1191px;top:811.4px;transform:translate(-100%,-50%) scaleX(0.83);transform-origin:100% 50%;font-size:16.4px;color:#222;">3,564,303,600</div>
<div style="left:1076px;top:822px;width:125px;height:23px;background:#acdde5;border:1px solid #3a3a3a;margin:-0.5px 0 0 -0.5px;box-sizing:border-box;"></div>
<div class="t" style="left:1191px;top:833.4px;transform:translate(-100%,-50%) scaleX(0.83);transform-origin:100% 50%;font-size:16.4px;color:#222;">4,128,949,140</div>
<div style="left:1076px;top:844px;width:125px;height:23px;background:#acdde5;border:1px solid #3a3a3a;margin:-0.5px 0 0 -0.5px;box-sizing:border-box;"></div>
<div class="t" style="left:1191px;top:855.4px;transform:translate(-100%,-50%) scaleX(0.83);transform-origin:100% 50%;font-size:16.4px;color:#222;">4,778,291,511</div>
<div style="left:1076px;top:866px;width:125px;height:23px;background:#7ccbd8;border:1px solid #3a3a3a;margin:-0.5px 0 0 -0.5px;box-sizing:border-box;"></div>
<div class="t" style="left:1191px;top:877.4px;transform:translate(-100%,-50%) scaleX(0.83);transform-origin:100% 50%;font-size:16.4px;color:#222;">5,525,035,238</div>
<div style="left:1076px;top:888px;width:125px;height:23px;background:#7ccbd8;border:1px solid #3a3a3a;margin:-0.5px 0 0 -0.5px;box-sizing:border-box;"></div>
<div class="t" style="left:1191px;top:899.4px;transform:translate(-100%,-50%) scaleX(0.83);transform-origin:100% 50%;font-size:16.4px;color:#222;">6,383,790,524</div>
<div style="left:1076px;top:910px;width:125px;height:23px;background:#7ccbd8;border:1px solid #3a3a3a;margin:-0.5px 0 0 -0.5px;box-sizing:border-box;"></div>
<div class="t" style="left:1191px;top:921.4px;transform:translate(-100%,-50%) scaleX(0.83);transform-origin:100% 50%;font-size:16.4px;color:#222;">7,371,359,103</div>
<div style="left:1076px;top:932px;width:125px;height:23px;background:#7ccbd8;border:1px solid #3a3a3a;margin:-0.5px 0 0 -0.5px;box-sizing:border-box;"></div>
<div class="t" style="left:1191px;top:943.4px;transform:translate(-100%,-50%) scaleX(0.83);transform-origin:100% 50%;font-size:16.4px;color:#222;">8,507,062,968</div>
<div style="left:1076px;top:954px;width:125px;height:23px;background:#7ccbd8;border:1px solid #3a3a3a;margin:-0.5px 0 0 -0.5px;box-sizing:border-box;"></div>
<div class="t" style="left:1191px;top:965.4px;transform:translate(-100%,-50%) scaleX(0.83);transform-origin:100% 50%;font-size:16.4px;color:#222;">9,813,122,413</div>
<div style="left:1076px;top:976px;width:125px;height:23px;background:#fbd3cd;border:1px solid #3a3a3a;margin:-0.5px 0 0 -0.5px;box-sizing:border-box;"></div>
<div class="t" style="left:1191px;top:987.4px;transform:translate(-100%,-50%) scaleX(0.83);transform-origin:100% 50%;font-size:16.4px;color:#222;">11,315,090,775</div>
<div style="left:1200px;top:338px;width:133px;height:23px;background:#d9e6f9;border:1px solid #3a3a3a;margin:-0.5px 0 0 -0.5px;box-sizing:border-box;"></div>
<div class="t" style="left:1266.0px;top:349.4px;transform:translate(-50%,-50%) scaleX(0.86);font-size:16.4px;color:#222;">20%</div>
<div style="left:1200px;top:360px;width:133px;height:23px;border:1px solid #3a3a3a;margin:-0.5px 0 0 -0.5px;box-sizing:border-box;"></div>
<div class="t" style="left:1323px;top:371.4px;transform:translate(-100%,-50%) scaleX(0.83);transform-origin:100% 50%;font-size:16.4px;color:#222;">30,000,000</div>
<div style="left:1200px;top:382px;width:133px;height:23px;border:1px solid #3a3a3a;margin:-0.5px 0 0 -0.5px;box-sizing:border-box;"></div>
<div class="t" style="left:1323px;top:393.4px;transform:translate(-100%,-50%) scaleX(0.83);transform-origin:100% 50%;font-size:16.4px;color:#222;">66,000,000</div>
<div style="left:1200px;top:404px;width:133px;height:23px;background:#d6f1da;border:1px solid #3a3a3a;margin:-0.5px 0 0 -0.5px;box-sizing:border-box;"></div>
<div class="t" style="left:1323px;top:415.4px;transform:translate(-100%,-50%) scaleX(0.83);transform-origin:100% 50%;font-size:16.4px;color:#222;">109,200,000</div>
<div style="left:1200px;top:426px;width:133px;height:23px;background:#d6f1da;border:1px solid #3a3a3a;margin:-0.5px 0 0 -0.5px;box-sizing:border-box;"></div>
<div class="t" style="left:1323px;top:437.4px;transform:translate(-100%,-50%) scaleX(0.83);transform-origin:100% 50%;font-size:16.4px;color:#222;">161,040,000</div>
<div style="left:1200px;top:448px;width:133px;height:23px;background:#d6f1da;border:1px solid #3a3a3a;margin:-0.5px 0 0 -0.5px;box-sizing:border-box;"></div>
<div class="t" style="left:1323px;top:459.4px;transform:translate(-100%,-50%) scaleX(0.83);transform-origin:100% 50%;font-size:16.4px;color:#222;">223,248,000</div>
<div style="left:1200px;top:470px;width:133px;height:23px;background:#d6f1da;border:1px solid #3a3a3a;margin:-0.5px 0 0 -0.5px;box-sizing:border-box;"></div>
<div class="t" style="left:1323px;top:481.4px;transform:translate(-100%,-50%) scaleX(0.83);transform-origin:100% 50%;font-size:16.4px;color:#222;">297,897,600</div>
<div style="left:1200px;top:492px;width:133px;height:23px;background:#aae0b4;border:1px solid #3a3a3a;margin:-0.5px 0 0 -0.5px;box-sizing:border-box;"></div>
<div class="t" style="left:1323px;top:503.4px;transform:translate(-100%,-50%) scaleX(0.83);transform-origin:100% 50%;font-size:16.4px;color:#222;">387,477,120</div>
<div style="left:1200px;top:514px;width:133px;height:23px;background:#aae0b4;border:1px solid #3a3a3a;margin:-0.5px 0 0 -0.5px;box-sizing:border-box;"></div>
<div class="t" style="left:1323px;top:525.4px;transform:translate(-100%,-50%) scaleX(0.83);transform-origin:100% 50%;font-size:16.4px;color:#222;">494,972,544</div>
<div style="left:1200px;top:536px;width:133px;height:23px;background:#7ccf8c;border:1px solid #3a3a3a;margin:-0.5px 0 0 -0.5px;box-sizing:border-box;"></div>
<div class="t" style="left:1323px;top:547.4px;transform:translate(-100%,-50%) scaleX(0.83);transform-origin:100% 50%;font-size:16.4px;color:#222;">623,967,053</div>
<div style="left:1200px;top:558px;width:133px;height:23px;background:#7ccf8c;border:1px solid #3a3a3a;margin:-0.5px 0 0 -0.5px;box-sizing:border-box;"></div>
<div class="t" style="left:1323px;top:569.4px;transform:translate(-100%,-50%) scaleX(0.83);transform-origin:100% 50%;font-size:16.4px;color:#222;">778,760,463</div>
<div style="left:1200px;top:580px;width:133px;height:23px;background:#7ccf8c;border:1px solid #3a3a3a;margin:-0.5px 0 0 -0.5px;box-sizing:border-box;"></div>
<div class="t" style="left:1323px;top:591.4px;transform:translate(-100%,-50%) scaleX(0.83);transform-origin:100% 50%;font-size:16.4px;color:#222;">964,512,556</div>
<div style="left:1200px;top:602px;width:133px;height:23px;background:#d9f0f3;border:1px solid #3a3a3a;margin:-0.5px 0 0 -0.5px;box-sizing:border-box;"></div>
<div class="t" style="left:1323px;top:613.4px;transform:translate(-100%,-50%) scaleX(0.83);transform-origin:100% 50%;font-size:16.4px;color:#222;">1,187,415,067</div>
<div style="left:1200px;top:624px;width:133px;height:23px;background:#d9f0f3;border:1px solid #3a3a3a;margin:-0.5px 0 0 -0.5px;box-sizing:border-box;"></div>
<div class="t" style="left:1323px;top:635.4px;transform:translate(-100%,-50%) scaleX(0.83);transform-origin:100% 50%;font-size:16.4px;color:#222;">1,454,898,081</div>
<div style="left:1200px;top:646px;width:133px;height:23px;background:#d9f0f3;border:1px solid #3a3a3a;margin:-0.5px 0 0 -0.5px;box-sizing:border-box;"></div>
<div class="t" style="left:1323px;top:657.4px;transform:translate(-100%,-50%) scaleX(0.83);transform-origin:100% 50%;font-size:16.4px;color:#222;">1,775,877,697</div>
<div style="left:1200px;top:668px;width:133px;height:23px;background:#d9f0f3;border:1px solid #3a3a3a;margin:-0.5px 0 0 -0.5px;box-sizing:border-box;"></div>
<div class="t" style="left:1323px;top:679.4px;transform:translate(-100%,-50%) scaleX(0.83);transform-origin:100% 50%;font-size:16.4px;color:#222;">2,161,053,236</div>
<div style="left:1200px;top:690px;width:133px;height:23px;background:#d9f0f3;border:1px solid #3a3a3a;margin:-0.5px 0 0 -0.5px;box-sizing:border-box;"></div>
<div class="t" style="left:1323px;top:701.4px;transform:translate(-100%,-50%) scaleX(0.83);transform-origin:100% 50%;font-size:16.4px;color:#222;">2,623,263,883</div>
<div style="left:1200px;top:712px;width:133px;height:23px;background:#acdde5;border:1px solid #3a3a3a;margin:-0.5px 0 0 -0.5px;box-sizing:border-box;"></div>
<div class="t" style="left:1323px;top:723.4px;transform:translate(-100%,-50%) scaleX(0.83);transform-origin:100% 50%;font-size:16.4px;color:#222;">3,177,916,660</div>
<div style="left:1200px;top:734px;width:133px;height:23px;background:#acdde5;border:1px solid #3a3a3a;margin:-0.5px 0 0 -0.5px;box-sizing:border-box;"></div>
<div class="t" style="left:1323px;top:745.4px;transform:translate(-100%,-50%) scaleX(0.83);transform-origin:100% 50%;font-size:16.4px;color:#222;">3,843,499,992</div>
<div style="left:1200px;top:756px;width:133px;height:23px;background:#acdde5;border:1px solid #3a3a3a;margin:-0.5px 0 0 -0.5px;box-sizing:border-box;"></div>
<div class="t" style="left:1323px;top:767.4px;transform:translate(-100%,-50%) scaleX(0.83);transform-origin:100% 50%;font-size:16.4px;color:#222;">4,642,199,991</div>
<div style="left:1200px;top:778px;width:133px;height:23px;background:#7ccbd8;border:1px solid #3a3a3a;margin:-0.5px 0 0 -0.5px;box-sizing:border-box;"></div>
<div class="t" style="left:1323px;top:789.4px;transform:translate(-100%,-50%) scaleX(0.83);transform-origin:100% 50%;font-size:16.4px;color:#222;">5,600,639,989</div>
<div style="left:1200px;top:800px;width:133px;height:23px;background:#7ccbd8;border:1px solid #3a3a3a;margin:-0.5px 0 0 -0.5px;box-sizing:border-box;"></div>
<div class="t" style="left:1323px;top:811.4px;transform:translate(-100%,-50%) scaleX(0.83);transform-origin:100% 50%;font-size:16.4px;color:#222;">6,750,767,986</div>
<div style="left:1200px;top:822px;width:133px;height:23px;background:#7ccbd8;border:1px solid #3a3a3a;margin:-0.5px 0 0 -0.5px;box-sizing:border-box;"></div>
<div class="t" style="left:1323px;top:833.4px;transform:translate(-100%,-50%) scaleX(0.83);transform-origin:100% 50%;font-size:16.4px;color:#222;">8,130,921,584</div>
<div style="left:1200px;top:844px;width:133px;height:23px;background:#7ccbd8;border:1px solid #3a3a3a;margin:-0.5px 0 0 -0.5px;box-sizing:border-box;"></div>
<div class="t" style="left:1323px;top:855.4px;transform:translate(-100%,-50%) scaleX(0.83);transform-origin:100% 50%;font-size:16.4px;color:#222;">9,787,105,900</div>
<div style="left:1200px;top:866px;width:133px;height:23px;background:#fbd3cd;border:1px solid #3a3a3a;margin:-0.5px 0 0 -0.5px;box-sizing:border-box;"></div>
<div class="t" style="left:1323px;top:877.4px;transform:translate(-100%,-50%) scaleX(0.83);transform-origin:100% 50%;font-size:16.4px;color:#222;">11,774,527,081</div>
<div style="left:1200px;top:888px;width:133px;height:23px;background:#fbd3cd;border:1px solid #3a3a3a;margin:-0.5px 0 0 -0.5px;box-sizing:border-box;"></div>
<div class="t" style="left:1323px;top:899.4px;transform:translate(-100%,-50%) scaleX(0.83);transform-origin:100% 50%;font-size:16.4px;color:#222;">14,159,432,497</div>
<div style="left:1200px;top:910px;width:133px;height:23px;background:#fbd3cd;border:1px solid #3a3a3a;margin:-0.5px 0 0 -0.5px;box-sizing:border-box;"></div>
<div class="t" style="left:1323px;top:921.4px;transform:translate(-100%,-50%) scaleX(0.83);transform-origin:100% 50%;font-size:16.4px;color:#222;">17,021,318,996</div>
<div style="left:1200px;top:932px;width:133px;height:23px;background:#fbd3cd;border:1px solid #3a3a3a;margin:-0.5px 0 0 -0.5px;box-sizing:border-box;"></div>
<div class="t" style="left:1323px;top:943.4px;transform:translate(-100%,-50%) scaleX(0.83);transform-origin:100% 50%;font-size:16.4px;color:#222;">20,455,582,795</div>
<div style="left:1200px;top:954px;width:133px;height:23px;background:#fbd3cd;border:1px solid #3a3a3a;margin:-0.5px 0 0 -0.5px;box-sizing:border-box;"></div>
<div class="t" style="left:1323px;top:965.4px;transform:translate(-100%,-50%) scaleX(0.83);transform-origin:100% 50%;font-size:16.4px;color:#222;">24,576,699,354</div>
<div style="left:1200px;top:976px;width:133px;height:23px;background:#fbd3cd;border:1px solid #3a3a3a;margin:-0.5px 0 0 -0.5px;box-sizing:border-box;"></div>
<div class="t" style="left:1323px;top:987.4px;transform:translate(-100%,-50%) scaleX(0.83);transform-origin:100% 50%;font-size:16.4px;color:#222;">29,522,039,225</div>
<div style="left:1396px;top:338px;width:128px;height:23px;background:#d9e6f9;border:1px solid #3a3a3a;margin:-0.5px 0 0 -0.5px;box-sizing:border-box;"></div>
<div class="t" style="left:1459.5px;top:349.4px;transform:translate(-50%,-50%) scaleX(0.86);font-size:16.4px;color:#222;">Color Index</div>
<div style="left:1396px;top:360px;width:128px;height:23px;background:#d6f1da;border:1px solid #3a3a3a;margin:-0.5px 0 0 -0.5px;box-sizing:border-box;"></div>
<div class="t" style="left:1459.5px;top:371.4px;transform:translate(-50%,-50%) scaleX(0.86);font-size:16.4px;color:#222;">1억 이상 달성</div>
<div style="left:1396px;top:382px;width:128px;height:23px;background:#aae0b4;border:1px solid #3a3a3a;margin:-0.5px 0 0 -0.5px;box-sizing:border-box;"></div>
<div class="t" style="left:1459.5px;top:393.4px;transform:translate(-50%,-50%) scaleX(0.86);font-size:16.4px;color:#222;">3억 이상 달성</div>
<div style="left:1396px;top:404px;width:128px;height:23px;background:#7ccf8c;border:1px solid #3a3a3a;margin:-0.5px 0 0 -0.5px;box-sizing:border-box;"></div>
<div class="t" style="left:1459.5px;top:415.4px;transform:translate(-50%,-50%) scaleX(0.86);font-size:16.4px;color:#222;">5억 이상 달성</div>
<div style="left:1396px;top:426px;width:128px;height:23px;background:#d9f0f3;border:1px solid #3a3a3a;margin:-0.5px 0 0 -0.5px;box-sizing:border-box;"></div>
<div class="t" style="left:1459.5px;top:437.4px;transform:translate(-50%,-50%) scaleX(0.86);font-size:16.4px;color:#222;">10억 이상 달성</div>
<div style="left:1396px;top:448px;width:128px;height:23px;background:#acdde5;border:1px solid #3a3a3a;margin:-0.5px 0 0 -0.5px;box-sizing:border-box;"></div>
<div class="t" style="left:1459.5px;top:459.4px;transform:translate(-50%,-50%) scaleX(0.86);font-size:16.4px;color:#222;">30억 이상 달성</div>
<div style="left:1396px;top:470px;width:128px;height:23px;background:#7ccbd8;border:1px solid #3a3a3a;margin:-0.5px 0 0 -0.5px;box-sizing:border-box;"></div>
<div class="t" style="left:1459.5px;top:481.4px;transform:translate(-50%,-50%) scaleX(0.86);font-size:16.4px;color:#222;">50억 이상 달성</div>
<div style="left:1396px;top:492px;width:128px;height:23px;background:#fbd3cd;border:1px solid #3a3a3a;margin:-0.5px 0 0 -0.5px;box-sizing:border-box;"></div>
<div class="t" style="left:1459.5px;top:503.4px;transform:translate(-50%,-50%) scaleX(0.86);font-size:16.4px;color:#222;">100억 이상 달성</div>
<div style="left:1898px;top:224px;width:22px;height:771px;background:#e9e9e9"></div>
<div style="left:1897px;top:240px;width:1.5px;height:755px;background:#c4c4c4"></div>
<div style="left:1902px;top:225px;width:15px;height:15px;background:#fff;border:1px solid #cfcfcf;box-sizing:border-box"></div>
<svg style="position:absolute;left:1902px;top:225px" width="15" height="15" viewBox="0 0 15 15"><path d="M4 9l3.5-3.5l3.5 3.5z" fill="#555"/></svg>
<div style="left:1901px;top:241px;width:17px;height:535px;background:#fff;border:1.5px solid #c8c8c8;box-sizing:border-box"></div>
<div style="left:1901px;top:776px;width:17px;height:206px;background:#dcdcdc"></div>
<div style="left:1902px;top:982px;width:15px;height:14px;background:#fff;border:1px solid #cfcfcf;box-sizing:border-box"></div>
<svg style="position:absolute;left:1902px;top:982px" width="15" height="14" viewBox="0 0 15 14"><path d="M4 5l3.5 3.5l3.5-3.5z" fill="#555"/></svg>
<div style="left:0px;top:995px;width:1920px;height:27px;background:#e8e8e8;border-top:1.5px solid #d4d4d4;border-bottom:1.5px solid #dcdcdc;box-sizing:border-box"></div>
<svg style="position:absolute;left:20px;top:1000px" width="50" height="16" viewBox="0 0 50 16"><path d="M11 4l-4 4l4 4M38 4l4 4l-4 4" fill="none" stroke="#bbb" stroke-width="1.2"/></svg>
<div style="left:100px;top:1000px;width:1px;height:19px;background:#c8c8c8"></div>
<div class="t" style="left:153px;top:1007.5px;transform:translate(-50%,-50%);font-size:13.5px;color:#444">노후자금 계산</div>
<div style="left:207px;top:995px;width:94px;height:24.5px;background:#fff;border-left:1px solid #c6c6c6;border-right:1px solid #c6c6c6;box-sizing:border-box"></div>
<div style="left:207px;top:1017.5px;width:94px;height:2px;background:#2f5f3f"></div>
<div class="t" style="left:254px;top:1007.5px;transform:translate(-50%,-50%);font-size:13.5px;color:#217346">수익률 계산</div>
<svg style="position:absolute;left:331px;top:999px" width="20" height="20" viewBox="0 0 20 20"><circle cx="10" cy="10" r="7" fill="none" stroke="#666" stroke-width="1.2"/><path d="M10 6v8M6 10h8" stroke="#666" stroke-width="1.2"/></svg>
<svg style="position:absolute;left:1148px;top:1000px" width="8" height="18" viewBox="0 0 8 18"><circle cx="4" cy="4" r="1" fill="#bbb"/><circle cx="4" cy="9" r="1" fill="#bbb"/><circle cx="4" cy="14" r="1" fill="#bbb"/></svg>
<div style="left:1169px;top:1002px;width:15px;height:15px;background:#fff;border:1px solid #cfcfcf;box-sizing:border-box"></div>
<svg style="position:absolute;left:1169px;top:1002px" width="15" height="15" viewBox="0 0 15 15"><path d="M9 4l-3.5 3.5l3.5 3.5z" fill="#555"/></svg>
<div style="left:1184px;top:1002px;width:660px;height:15px;background:#fff;border:1px solid #cfcfcf;border-left:none;box-sizing:border-box"></div>
<div style="left:1844px;top:1002px;width:40px;height:15px;background:#e0e0e0"></div>
<div style="left:1884px;top:1002px;width:15px;height:15px;background:#fff;border:1px solid #cfcfcf;box-sizing:border-box"></div>
<svg style="position:absolute;left:1884px;top:1002px" width="15" height="15" viewBox="0 0 15 15"><path d="M6 4l3.5 3.5l-3.5 3.5z" fill="#555"/></svg>
<div style="left:0px;top:1022px;width:1920px;height:23px;background:#f3f2f1"></div>
<div class="t" style="left:8px;top:1032.5px;transform:translateY(-50%);font-size:13px;color:#444">준비</div>
<div style="left:1616px;top:1020px;width:40px;height:25px;background:#d4d4d4"></div>
<svg style="position:absolute;left:1620px;top:1024px" width="300" height="18" viewBox="0 0 300 18">
<g fill="none" stroke="#555" stroke-width="1.2">
<rect x="6" y="2" width="14" height="14"/><path d="M6 6.5h14M6 11h14M10.5 2v14M15 2v14"/>
<rect x="49" y="2" width="14" height="14"/><path d="M52 2v14M60 2v14"/>
<rect x="89" y="2" width="14" height="14"/><path d="M92 2v7h8v-7"/>
</g>
<path d="M122 9h8M135 9h100M240 9h8M244 5v8" stroke="#777" stroke-width="1.2"/>
<rect x="183" y="4" width="4" height="10" fill="#555"/>
</svg>
<div class="t" style="left:1881px;top:1033px;transform:translateY(-50%);font-size:13px;color:#444">100%</div>
<div style="left:0px;top:1045px;width:1920px;height:35px;background:#fff"></div>
<svg style="position:absolute;left:0;top:1045px" width="240" height="35" viewBox="0 0 240 35"><g transform="translate(19,16)"><circle r="14" fill="#fff" stroke="#d6d6d6" stroke-width="1.2"/><g transform="scale(1.35)"><path d="M-2 0l4-4v8z" fill="none" stroke="#c8c8c8" stroke-width="1.2"/></g></g><g transform="translate(57,16)"><circle r="14" fill="#fff" stroke="#d6d6d6" stroke-width="1.2"/><g transform="scale(1.35)"><path d="M2 0l-4-4v8z" fill="none" stroke="#c8c8c8" stroke-width="1.2"/></g></g><g transform="translate(95,16)"><circle r="14" fill="#fff" stroke="#d6d6d6" stroke-width="1.2"/><g transform="scale(1.35)"><path d="M-5 5l8-8l2 2l-8 8z" fill="none" stroke="#c8c8c8" stroke-width="1.2"/></g></g><g transform="translate(132.5,16)"><circle r="14" fill="#fff" stroke="#d6d6d6" stroke-width="1.2"/><g transform="scale(1.35)"><rect x="-5" y="-5" width="7" height="7" fill="none" stroke="#c8c8c8" stroke-width="1.2"/><rect x="-2" y="-2" width="7" height="7" fill="#fff" stroke="#c8c8c8" stroke-width="1.2"/></g></g><g transform="translate(170.5,16)"><circle r="14" fill="#fff" stroke="#d6d6d6" stroke-width="1.2"/><g transform="scale(1.35)"><circle cx="-1" cy="-1" r="4" fill="none" stroke="#c8c8c8" stroke-width="1.2"/><path d="M2 2l4 4" stroke="#c8c8c8" stroke-width="1.4"/></g></g><g transform="translate(208,16)"><circle r="14" fill="#fff" stroke="#d6d6d6" stroke-width="1.2"/><g transform="scale(1.35)"><path d="M-5 0h10" stroke="#c8c8c8" stroke-width="1.2"/></g></g></svg>
</div></body></html>
